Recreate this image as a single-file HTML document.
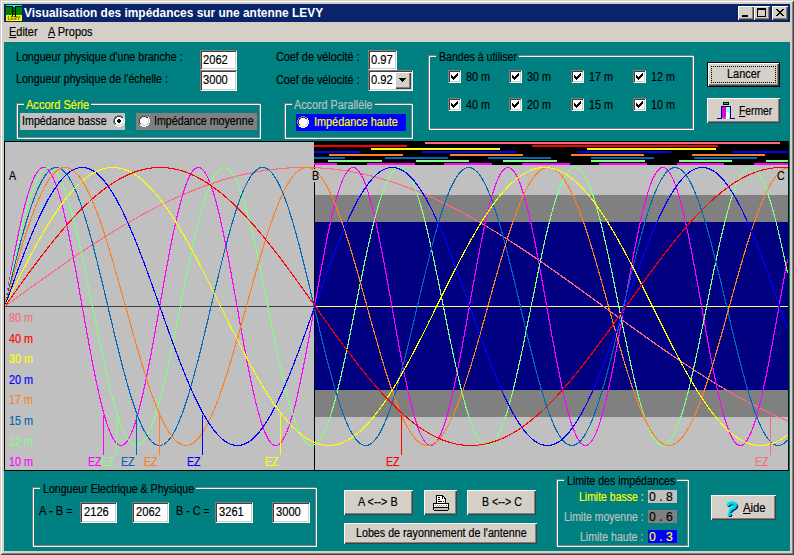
<!DOCTYPE html>
<html><head><meta charset="utf-8"><title>Visualisation des impédances sur une antenne LEVY</title>
<style>
html,body{margin:0;padding:0;}
body{width:794px;height:555px;overflow:hidden;background:#D4D0C8;font-family:"Liberation Sans",sans-serif;position:relative;}
#win{position:absolute;left:0;top:0;width:794px;height:555px;background:#D4D0C8;box-sizing:border-box;overflow:hidden;
 box-shadow:inset 1px 1px 0 #D4D0C8, inset -1px -1px 0 #404040, inset 2px 2px 0 #fff, inset -2px -2px 0 #808080;}
.t{position:absolute;white-space:nowrap;line-height:16px;transform-origin:0 50%;font-family:"Liberation Sans",sans-serif;-webkit-text-stroke:0.18px currentColor;}
.t u{text-decoration:underline;text-underline-offset:1px;}
</style></head><body><div id="win">
<div style="position:absolute;left:4px;top:4px;width:786px;height:18px;background:#0A246A;"></div>
<svg style="position:absolute;left:6px;top:5px" width="16" height="16" viewBox="0 0 16 16" shape-rendering="crispEdges">
<rect width="16" height="1" fill="#00FFFF"/><rect y="1" width="16" height="1" fill="#000"/><rect x="7" y="1" width="2" height="1" fill="#00FFFF"/>
<rect y="2" width="16" height="8" fill="#008000"/><rect y="10" width="16" height="6" fill="#FFFF00"/>
<rect x="6" y="1" width="1.4" height="11" fill="#000"/><rect x="9" y="1" width="1.4" height="11" fill="#000"/>
<rect x="7.4" y="2" width="1.6" height="8" fill="#006000"/>
<rect x="7.6" y="4" width="1.2" height="1" fill="#00A000"/><rect x="7.6" y="7" width="1.2" height="1" fill="#00A000"/>
<text x="1.5" y="15" font-family="Liberation Sans" font-size="5.5" font-weight="700" fill="#5a5a00" textLength="13">LEVY</text>
</svg>
<div class="t" style="left:23.7px;top:4.67px;color:#fff;font-size:12.5px;font-weight:700;transform:scaleX(0.9533);-webkit-text-stroke:0;">Visualisation des impédances sur une antenne LEVY</div>
<div style="position:absolute;left:738px;top:6px;width:16px;height:14px;background:#D4D0C8;box-shadow:inset 1px 1px 0 #fff, inset -1px -1px 0 #404040, inset -2px -2px 0 #808080;"></div>
<svg style="position:absolute;left:738px;top:6px" width="16" height="14" viewBox="0 0 16 14" shape-rendering="crispEdges"><rect x="4" y="9" width="6" height="2" fill="#000"/></svg>
<div style="position:absolute;left:754px;top:6px;width:16px;height:14px;background:#D4D0C8;box-shadow:inset 1px 1px 0 #fff, inset -1px -1px 0 #404040, inset -2px -2px 0 #808080;"></div>
<svg style="position:absolute;left:754px;top:6px" width="16" height="14" viewBox="0 0 16 14" shape-rendering="crispEdges"><rect x="3" y="2" width="8" height="8" fill="none" stroke="#000" stroke-width="1" transform="translate(.5,.5)"/><rect x="3" y="2" width="9" height="2" fill="#000"/></svg>
<div style="position:absolute;left:772px;top:6px;width:16px;height:14px;background:#D4D0C8;box-shadow:inset 1px 1px 0 #fff, inset -1px -1px 0 #404040, inset -2px -2px 0 #808080;"></div>
<svg style="position:absolute;left:772px;top:6px" width="16" height="14" viewBox="0 0 16 14" shape-rendering="crispEdges"><path d="M4 3h2v1h1v1h2v-1h1v-1h2v1h-1v1h-1v1h-1v1h1v1h1v1h1v1h-2v-1h-1v-1h-2v1h-1v1h-2v-1h1v-1h1v-1h1v-1h-1v-1h-1v-1h-1z" fill="#000"/></svg>
<div style="position:absolute;left:4px;top:22px;width:786px;height:20px;background:#D4D0C8;"></div>
<div class="t" style="left:9.2px;top:23.84px;color:#000;font-size:12px;font-weight:400;transform:scaleX(0.9123);"><u>E</u>diter</div>
<div class="t" style="left:48.2px;top:23.84px;color:#000;font-size:12px;font-weight:400;transform:scaleX(0.9158);"><u>A</u> Propos</div>
<div style="position:absolute;left:4px;top:42px;width:786px;height:509px;background:#008080;"></div>
<svg width="794" height="555" viewBox="0 0 794 555" style="position:absolute;left:0;top:0" shape-rendering="crispEdges"><rect x="5" y="142" width="783" height="328" fill="#C0C0C0"/>
<rect x="315" y="165" width="473" height="305" fill="#C0C0C0"/>
<rect x="315" y="195" width="473" height="222" fill="#808080"/>
<rect x="315" y="222" width="473" height="168" fill="#000080"/>
<rect x="314" y="142" width="474" height="23" fill="#000000"/>
<rect x="5" y="306" width="309" height="1" fill="#404040"/>
<rect x="315" y="306" width="473" height="1" fill="#FFFF70"/>
<rect x="314" y="165" width="1" height="305" fill="#000"/>
<rect x="313" y="169" width="8" height="13" fill="#C0C0C0"/>
<rect x="425" y="142" width="355" height="2" fill="#FF6880"/>
<rect x="314" y="145" width="93" height="2" fill="#FF0000"/>
<rect x="532" y="145" width="186" height="2" fill="#FF0000"/>
<rect x="371" y="148" width="129" height="2" fill="#FFFF00"/>
<rect x="587" y="148" width="129" height="2" fill="#FFFF00"/>
<rect x="314" y="151" width="47" height="2" fill="#0000FF"/>
<rect x="422" y="151" width="94" height="2" fill="#0000FF"/>
<rect x="577" y="151" width="94" height="2" fill="#0000FF"/>
<rect x="732" y="151" width="57" height="2" fill="#0000FF"/>
<rect x="329" y="154" width="74" height="2" fill="#FF8020"/>
<rect x="450" y="154" width="73" height="2" fill="#FF8020"/>
<rect x="571" y="154" width="73" height="2" fill="#FF8020"/>
<rect x="692" y="154" width="73" height="2" fill="#FF8020"/>
<rect x="314" y="157" width="31" height="2" fill="#0068B8"/>
<rect x="385" y="157" width="63" height="2" fill="#0068B8"/>
<rect x="488" y="157" width="63" height="2" fill="#0068B8"/>
<rect x="591" y="157" width="63" height="2" fill="#0068B8"/>
<rect x="694" y="157" width="63" height="2" fill="#0068B8"/>
<rect x="328" y="160" width="54" height="2" fill="#80FF80"/>
<rect x="416" y="160" width="53" height="2" fill="#80FF80"/>
<rect x="503" y="160" width="54" height="2" fill="#80FF80"/>
<rect x="591" y="160" width="54" height="2" fill="#80FF80"/>
<rect x="679" y="160" width="53" height="2" fill="#80FF80"/>
<rect x="766" y="160" width="23" height="2" fill="#80FF80"/>
<rect x="314" y="163" width="23" height="2" fill="#FF00FF"/>
<rect x="367" y="163" width="48" height="2" fill="#FF00FF"/>
<rect x="444" y="163" width="48" height="2" fill="#FF00FF"/>
<rect x="522" y="163" width="48" height="2" fill="#FF00FF"/>
<rect x="599" y="163" width="48" height="2" fill="#FF00FF"/>
<rect x="677" y="163" width="47" height="2" fill="#FF00FF"/>
<rect x="754" y="163" width="35" height="2" fill="#FF00FF"/>
<polyline points="5.5,306.0 6.5,305.3 7.5,304.5 8.5,303.8 9.5,303.1 10.5,302.3 11.5,301.6 12.5,300.9 13.5,300.2 14.5,299.4 15.5,298.7 16.5,298.0 17.5,297.2 18.5,296.5 19.5,295.8 20.5,295.1 21.5,294.3 22.5,293.6 23.5,292.9 24.5,292.2 25.5,291.4 26.5,290.7 27.5,290.0 28.5,289.3 29.5,288.5 30.5,287.8 31.5,287.1 32.5,286.4 33.5,285.6 34.5,284.9 35.5,284.2 36.5,283.5 37.5,282.8 38.5,282.1 39.5,281.3 40.5,280.6 41.5,279.9 42.5,279.2 43.5,278.5 44.5,277.8 45.5,277.0 46.5,276.3 47.5,275.6 48.5,274.9 49.5,274.2 50.5,273.5 51.5,272.8 52.5,272.1 53.5,271.4 54.5,270.7 55.5,270.0 56.5,269.3 57.5,268.6 58.5,267.9 59.5,267.2 60.5,266.5 61.5,265.8 62.5,265.1 63.5,264.4 64.5,263.7 65.5,263.0 66.5,262.3 67.5,261.6 68.5,260.9 69.5,260.2 70.5,259.5 71.5,258.8 72.5,258.2 73.5,257.5 74.5,256.8 75.5,256.1 76.5,255.4 77.5,254.8 78.5,254.1 79.5,253.4 80.5,252.7 81.5,252.1 82.5,251.4 83.5,250.7 84.5,250.1 85.5,249.4 86.5,248.7 87.5,248.1 88.5,247.4 89.5,246.7 90.5,246.1 91.5,245.4 92.5,244.8 93.5,244.1 94.5,243.5 95.5,242.8 96.5,242.2 97.5,241.5 98.5,240.9 99.5,240.2 100.5,239.6 101.5,239.0 102.5,238.3 103.5,237.7 104.5,237.1 105.5,236.4 106.5,235.8 107.5,235.2 108.5,234.6 109.5,233.9 110.5,233.3 111.5,232.7 112.5,232.1 113.5,231.5 114.5,230.8 115.5,230.2 116.5,229.6 117.5,229.0 118.5,228.4 119.5,227.8 120.5,227.2 121.5,226.6 122.5,226.0 123.5,225.4 124.5,224.8 125.5,224.2 126.5,223.7 127.5,223.1 128.5,222.5 129.5,221.9 130.5,221.3 131.5,220.8 132.5,220.2 133.5,219.6 134.5,219.0 135.5,218.5 136.5,217.9 137.5,217.4 138.5,216.8 139.5,216.2 140.5,215.7 141.5,215.1 142.5,214.6 143.5,214.0 144.5,213.5 145.5,213.0 146.5,212.4 147.5,211.9 148.5,211.4 149.5,210.8 150.5,210.3 151.5,209.8 152.5,209.2 153.5,208.7 154.5,208.2 155.5,207.7 156.5,207.2 157.5,206.7 158.5,206.2 159.5,205.7 160.5,205.2 161.5,204.7 162.5,204.2 163.5,203.7 164.5,203.2 165.5,202.7 166.5,202.2 167.5,201.7 168.5,201.3 169.5,200.8 170.5,200.3 171.5,199.8 172.5,199.4 173.5,198.9 174.5,198.5 175.5,198.0 176.5,197.5 177.5,197.1 178.5,196.6 179.5,196.2 180.5,195.8 181.5,195.3 182.5,194.9 183.5,194.5 184.5,194.0 185.5,193.6 186.5,193.2 187.5,192.7 188.5,192.3 189.5,191.9 190.5,191.5 191.5,191.1 192.5,190.7 193.5,190.3 194.5,189.9 195.5,189.5 196.5,189.1 197.5,188.7 198.5,188.3 199.5,187.9 200.5,187.6 201.5,187.2 202.5,186.8 203.5,186.5 204.5,186.1 205.5,185.7 206.5,185.4 207.5,185.0 208.5,184.7 209.5,184.3 210.5,184.0 211.5,183.6 212.5,183.3 213.5,182.9 214.5,182.6 215.5,182.3 216.5,182.0 217.5,181.6 218.5,181.3 219.5,181.0 220.5,180.7 221.5,180.4 222.5,180.1 223.5,179.8 224.5,179.5 225.5,179.2 226.5,178.9 227.5,178.6 228.5,178.3 229.5,178.0 230.5,177.8 231.5,177.5 232.5,177.2 233.5,177.0 234.5,176.7 235.5,176.4 236.5,176.2 237.5,175.9 238.5,175.7 239.5,175.4 240.5,175.2 241.5,175.0 242.5,174.7 243.5,174.5 244.5,174.3 245.5,174.0 246.5,173.8 247.5,173.6 248.5,173.4 249.5,173.2 250.5,173.0 251.5,172.8 252.5,172.6 253.5,172.4 254.5,172.2 255.5,172.0 256.5,171.8 257.5,171.7 258.5,171.5 259.5,171.3 260.5,171.1 261.5,171.0 262.5,170.8 263.5,170.7 264.5,170.5 265.5,170.4 266.5,170.2 267.5,170.1 268.5,169.9 269.5,169.8 270.5,169.7 271.5,169.5 272.5,169.4 273.5,169.3 274.5,169.2 275.5,169.1 276.5,169.0 277.5,168.9 278.5,168.8 279.5,168.7 280.5,168.6 281.5,168.5 282.5,168.4 283.5,168.3 284.5,168.2 285.5,168.2 286.5,168.1 287.5,168.0 288.5,168.0 289.5,167.9 290.5,167.9 291.5,167.8 292.5,167.8 293.5,167.7 294.5,167.7 295.5,167.6 296.5,167.6 297.5,167.6 298.5,167.6 299.5,167.5 300.5,167.5 301.5,167.5 302.5,167.5 303.5,167.5 304.5,167.5 305.5,167.5 306.5,167.5 307.5,167.5 308.5,167.5 309.5,167.6 310.5,167.6 311.5,167.6 312.5,167.6 313.5,167.7 314.5,167.7 315.5,167.7 316.5,167.8 317.5,167.8 318.5,167.9 319.5,167.9 320.5,168.0 321.5,168.1 322.5,168.1 323.5,168.2 324.5,168.3 325.5,168.4 326.5,168.5 327.5,168.5 328.5,168.6 329.5,168.7 330.5,168.8 331.5,168.9 332.5,169.0 333.5,169.1 334.5,169.3 335.5,169.4 336.5,169.5 337.5,169.6 338.5,169.7 339.5,169.9 340.5,170.0 341.5,170.2 342.5,170.3 343.5,170.4 344.5,170.6 345.5,170.8 346.5,170.9 347.5,171.1 348.5,171.2 349.5,171.4 350.5,171.6 351.5,171.8 352.5,171.9 353.5,172.1 354.5,172.3 355.5,172.5 356.5,172.7 357.5,172.9 358.5,173.1 359.5,173.3 360.5,173.5 361.5,173.7 362.5,174.0 363.5,174.2 364.5,174.4 365.5,174.6 366.5,174.9 367.5,175.1 368.5,175.3 369.5,175.6 370.5,175.8 371.5,176.1 372.5,176.3 373.5,176.6 374.5,176.8 375.5,177.1 376.5,177.4 377.5,177.7 378.5,177.9 379.5,178.2 380.5,178.5 381.5,178.8 382.5,179.1 383.5,179.4 384.5,179.7 385.5,180.0 386.5,180.3 387.5,180.6 388.5,180.9 389.5,181.2 390.5,181.5 391.5,181.8 392.5,182.2 393.5,182.5 394.5,182.8 395.5,183.1 396.5,183.5 397.5,183.8 398.5,184.2 399.5,184.5 400.5,184.9 401.5,185.2 402.5,185.6 403.5,185.9 404.5,186.3 405.5,186.7 406.5,187.0 407.5,187.4 408.5,187.8 409.5,188.2 410.5,188.6 411.5,188.9 412.5,189.3 413.5,189.7 414.5,190.1 415.5,190.5 416.5,190.9 417.5,191.3 418.5,191.8 419.5,192.2 420.5,192.6 421.5,193.0 422.5,193.4 423.5,193.8 424.5,194.3 425.5,194.7 426.5,195.1 427.5,195.6 428.5,196.0 429.5,196.5 430.5,196.9 431.5,197.4 432.5,197.8 433.5,198.3 434.5,198.7 435.5,199.2 436.5,199.7 437.5,200.1 438.5,200.6 439.5,201.1 440.5,201.6 441.5,202.0 442.5,202.5 443.5,203.0 444.5,203.5 445.5,204.0 446.5,204.5 447.5,205.0 448.5,205.5 449.5,206.0 450.5,206.5 451.5,207.0 452.5,207.5 453.5,208.0 454.5,208.5 455.5,209.0 456.5,209.6 457.5,210.1 458.5,210.6 459.5,211.1 460.5,211.7 461.5,212.2 462.5,212.7 463.5,213.3 464.5,213.8 465.5,214.4 466.5,214.9 467.5,215.5 468.5,216.0 469.5,216.6 470.5,217.1 471.5,217.7 472.5,218.3 473.5,218.8 474.5,219.4 475.5,220.0 476.5,220.5 477.5,221.1 478.5,221.7 479.5,222.3 480.5,222.8 481.5,223.4 482.5,224.0 483.5,224.6 484.5,225.2 485.5,225.8 486.5,226.4 487.5,227.0 488.5,227.6 489.5,228.2 490.5,228.8 491.5,229.4 492.5,230.0 493.5,230.6 494.5,231.2 495.5,231.8 496.5,232.4 497.5,233.1 498.5,233.7 499.5,234.3 500.5,234.9 501.5,235.6 502.5,236.2 503.5,236.8 504.5,237.4 505.5,238.1 506.5,238.7 507.5,239.3 508.5,240.0 509.5,240.6 510.5,241.3 511.5,241.9 512.5,242.6 513.5,243.2 514.5,243.9 515.5,244.5 516.5,245.2 517.5,245.8 518.5,246.5 519.5,247.1 520.5,247.8 521.5,248.5 522.5,249.1 523.5,249.8 524.5,250.5 525.5,251.1 526.5,251.8 527.5,252.5 528.5,253.1 529.5,253.8 530.5,254.5 531.5,255.2 532.5,255.8 533.5,256.5 534.5,257.2 535.5,257.9 536.5,258.6 537.5,259.3 538.5,259.9 539.5,260.6 540.5,261.3 541.5,262.0 542.5,262.7 543.5,263.4 544.5,264.1 545.5,264.8 546.5,265.5 547.5,266.2 548.5,266.9 549.5,267.6 550.5,268.3 551.5,269.0 552.5,269.7 553.5,270.4 554.5,271.1 555.5,271.8 556.5,272.5 557.5,273.2 558.5,273.9 559.5,274.6 560.5,275.3 561.5,276.0 562.5,276.8 563.5,277.5 564.5,278.2 565.5,278.9 566.5,279.6 567.5,280.3 568.5,281.0 569.5,281.8 570.5,282.5 571.5,283.2 572.5,283.9 573.5,284.6 574.5,285.4 575.5,286.1 576.5,286.8 577.5,287.5 578.5,288.2 579.5,289.0 580.5,289.7 581.5,290.4 582.5,291.1 583.5,291.9 584.5,292.6 585.5,293.3 586.5,294.0 587.5,294.8 588.5,295.5 589.5,296.2 590.5,297.0 591.5,297.7 592.5,298.4 593.5,299.1 594.5,299.9 595.5,300.6 596.5,301.3 597.5,302.1 598.5,302.8 599.5,303.5 600.5,304.2 601.5,305.0 602.5,305.7 603.5,306.4 604.5,307.2 605.5,307.9 606.5,308.6 607.5,309.3 608.5,310.1 609.5,310.8 610.5,311.5 611.5,312.3 612.5,313.0 613.5,313.7 614.5,314.4 615.5,315.2 616.5,315.9 617.5,316.6 618.5,317.4 619.5,318.1 620.5,318.8 621.5,319.5 622.5,320.3 623.5,321.0 624.5,321.7 625.5,322.4 626.5,323.2 627.5,323.9 628.5,324.6 629.5,325.3 630.5,326.1 631.5,326.8 632.5,327.5 633.5,328.2 634.5,328.9 635.5,329.7 636.5,330.4 637.5,331.1 638.5,331.8 639.5,332.5 640.5,333.2 641.5,334.0 642.5,334.7 643.5,335.4 644.5,336.1 645.5,336.8 646.5,337.5 647.5,338.2 648.5,338.9 649.5,339.7 650.5,340.4 651.5,341.1 652.5,341.8 653.5,342.5 654.5,343.2 655.5,343.9 656.5,344.6 657.5,345.3 658.5,346.0 659.5,346.7 660.5,347.4 661.5,348.1 662.5,348.8 663.5,349.5 664.5,350.2 665.5,350.9 666.5,351.5 667.5,352.2 668.5,352.9 669.5,353.6 670.5,354.3 671.5,355.0 672.5,355.7 673.5,356.3 674.5,357.0 675.5,357.7 676.5,358.4 677.5,359.1 678.5,359.7 679.5,360.4 680.5,361.1 681.5,361.7 682.5,362.4 683.5,363.1 684.5,363.7 685.5,364.4 686.5,365.1 687.5,365.7 688.5,366.4 689.5,367.0 690.5,367.7 691.5,368.4 692.5,369.0 693.5,369.7 694.5,370.3 695.5,371.0 696.5,371.6 697.5,372.2 698.5,372.9 699.5,373.5 700.5,374.2 701.5,374.8 702.5,375.4 703.5,376.1 704.5,376.7 705.5,377.3 706.5,377.9 707.5,378.6 708.5,379.2 709.5,379.8 710.5,380.4 711.5,381.1 712.5,381.7 713.5,382.3 714.5,382.9 715.5,383.5 716.5,384.1 717.5,384.7 718.5,385.3 719.5,385.9 720.5,386.5 721.5,387.1 722.5,387.7 723.5,388.3 724.5,388.9 725.5,389.5 726.5,390.0 727.5,390.6 728.5,391.2 729.5,391.8 730.5,392.4 731.5,392.9 732.5,393.5 733.5,394.1 734.5,394.6 735.5,395.2 736.5,395.8 737.5,396.3 738.5,396.9 739.5,397.4 740.5,398.0 741.5,398.5 742.5,399.1 743.5,399.6 744.5,400.1 745.5,400.7 746.5,401.2 747.5,401.8 748.5,402.3 749.5,402.8 750.5,403.3 751.5,403.9 752.5,404.4 753.5,404.9 754.5,405.4 755.5,405.9 756.5,406.4 757.5,406.9 758.5,407.4 759.5,407.9 760.5,408.4 761.5,408.9 762.5,409.4 763.5,409.9 764.5,410.4 765.5,410.9 766.5,411.4 767.5,411.8 768.5,412.3 769.5,412.8 770.5,413.2 771.5,413.7 772.5,414.2 773.5,414.6 774.5,415.1 775.5,415.5 776.5,416.0 777.5,416.4 778.5,416.9 779.5,417.3 780.5,417.8 781.5,418.2 782.5,418.6 783.5,419.1 784.5,419.5 785.5,419.9 786.5,420.3 787.5,420.8" fill="none" stroke="#FF6880" stroke-width="1.15" shape-rendering="crispEdges"/>
<polyline points="5.5,302.6 6.5,296.9 7.5,291.3 8.5,285.7 9.5,280.2 10.5,274.6 11.5,269.2 12.5,263.8 13.5,258.4 14.5,253.2 15.5,248.0 16.5,243.0 17.5,238.0 18.5,233.1 19.5,228.4 20.5,223.8 21.5,219.4 22.5,215.0 23.5,210.9 24.5,206.8 25.5,203.0 26.5,199.3 27.5,195.8 28.5,192.5 29.5,189.4 30.5,186.4 31.5,183.7 32.5,181.1 33.5,178.8 34.5,176.7 35.5,174.8 36.5,173.1 37.5,171.6 38.5,170.4 39.5,169.3 40.5,168.5 41.5,168.0 42.5,167.6 43.5,167.5 44.5,167.6 45.5,168.0 46.5,168.5 47.5,169.3 48.5,170.3 49.5,171.6 50.5,173.1 51.5,174.7 52.5,176.6 53.5,178.8 54.5,181.1 55.5,183.6 56.5,186.4 57.5,189.3 58.5,192.4 59.5,195.7 60.5,199.2 61.5,202.9 62.5,206.8 63.5,210.8 64.5,214.9 65.5,219.3 66.5,223.7 67.5,228.3 68.5,233.0 69.5,237.9 70.5,242.9 71.5,247.9 72.5,253.1 73.5,258.3 74.5,263.7 75.5,269.1 76.5,274.5 77.5,280.0 78.5,285.6 79.5,291.2 80.5,296.8 81.5,302.4 82.5,308.1 83.5,313.7 84.5,319.3 85.5,324.9 86.5,330.5 87.5,336.1 88.5,341.5 89.5,347.0 90.5,352.3 91.5,357.6 92.5,362.8 93.5,367.9 94.5,372.9 95.5,377.8 96.5,382.6 97.5,387.3 98.5,391.8 99.5,396.2 100.5,400.4 101.5,404.5 102.5,408.4 103.5,412.2 104.5,415.7 105.5,419.1 106.5,422.3 107.5,425.4 108.5,428.2 109.5,430.8 110.5,433.2 111.5,435.4 112.5,437.4 113.5,439.2 114.5,440.8 115.5,442.1 116.5,443.3 117.5,444.2 118.5,444.8 119.5,445.3 120.5,445.5 121.5,445.5 122.5,445.2 123.5,444.7 124.5,444.0 125.5,443.1 126.5,442.0 127.5,440.6 128.5,439.0 129.5,437.2 130.5,435.2 131.5,432.9 132.5,430.5 133.5,427.8 134.5,425.0 135.5,421.9 136.5,418.7 137.5,415.2 138.5,411.6 139.5,407.9 140.5,403.9 141.5,399.8 142.5,395.6 143.5,391.2 144.5,386.6 145.5,382.0 146.5,377.2 147.5,372.2 148.5,367.2 149.5,362.1 150.5,356.9 151.5,351.6 152.5,346.2 153.5,340.8 154.5,335.3 155.5,329.7 156.5,324.2 157.5,318.6 158.5,312.9 159.5,307.3 160.5,301.7 161.5,296.0 162.5,290.4 163.5,284.8 164.5,279.3 165.5,273.8 166.5,268.3 167.5,262.9 168.5,257.6 169.5,252.4 170.5,247.2 171.5,242.2 172.5,237.2 173.5,232.4 174.5,227.7 175.5,223.1 176.5,218.6 177.5,214.4 178.5,210.2 179.5,206.2 180.5,202.4 181.5,198.7 182.5,195.3 183.5,192.0 184.5,188.9 185.5,186.0 186.5,183.3 187.5,180.8 188.5,178.5 189.5,176.4 190.5,174.5 191.5,172.8 192.5,171.4 193.5,170.2 194.5,169.2 195.5,168.4 196.5,167.9 197.5,167.6 198.5,167.5 199.5,167.7 200.5,168.0 201.5,168.6 202.5,169.5 203.5,170.5 204.5,171.8 205.5,173.3 206.5,175.0 207.5,177.0 208.5,179.1 209.5,181.5 210.5,184.1 211.5,186.8 212.5,189.8 213.5,192.9 214.5,196.3 215.5,199.8 216.5,203.5 217.5,207.4 218.5,211.4 219.5,215.6 220.5,220.0 221.5,224.5 222.5,229.1 223.5,233.8 224.5,238.7 225.5,243.7 226.5,248.7 227.5,253.9 228.5,259.2 229.5,264.5 230.5,269.9 231.5,275.4 232.5,280.9 233.5,286.5 234.5,292.1 235.5,297.7 236.5,303.3 237.5,309.0 238.5,314.6 239.5,320.2 240.5,325.8 241.5,331.4 242.5,336.9 243.5,342.4 244.5,347.8 245.5,353.2 246.5,358.5 247.5,363.6 248.5,368.7 249.5,373.7 250.5,378.6 251.5,383.4 252.5,388.0 253.5,392.5 254.5,396.9 255.5,401.1 256.5,405.1 257.5,409.0 258.5,412.7 259.5,416.3 260.5,419.7 261.5,422.8 262.5,425.8 263.5,428.6 264.5,431.2 265.5,433.6 266.5,435.8 267.5,437.7 268.5,439.5 269.5,441.0 270.5,442.3 271.5,443.4 272.5,444.3 273.5,444.9 274.5,445.3 275.5,445.5 276.5,445.4 277.5,445.2 278.5,444.6 279.5,443.9 280.5,442.9 281.5,441.8 282.5,440.3 283.5,438.7 284.5,436.9 285.5,434.8 286.5,432.5 287.5,430.0 288.5,427.4 289.5,424.5 290.5,421.4 291.5,418.1 292.5,414.7 293.5,411.1 294.5,407.2 295.5,403.3 296.5,399.2 297.5,394.9 298.5,390.4 299.5,385.9 300.5,381.2 301.5,376.4 302.5,371.4 303.5,366.4 304.5,361.3 305.5,356.0 306.5,350.7 307.5,345.3 308.5,339.9 309.5,334.4 310.5,328.9 311.5,323.3 312.5,317.7 313.5,312.0 314.5,306.4 315.5,300.7 316.5,295.1 317.5,289.5 318.5,283.9 319.5,278.4 320.5,272.9 321.5,267.4 322.5,262.1 323.5,256.8 324.5,251.5 325.5,246.4 326.5,241.4 327.5,236.4 328.5,231.6 329.5,226.9 330.5,222.4 331.5,218.0 332.5,213.7 333.5,209.6 334.5,205.6 335.5,201.8 336.5,198.2 337.5,194.7 338.5,191.5 339.5,188.4 340.5,185.5 341.5,182.8 342.5,180.4 343.5,178.1 344.5,176.1 345.5,174.2 346.5,172.6 347.5,171.2 348.5,170.0 349.5,169.1 350.5,168.3 351.5,167.8 352.5,167.6 353.5,167.5 354.5,167.7 355.5,168.1 356.5,168.8 357.5,169.6 358.5,170.7 359.5,172.0 360.5,173.6 361.5,175.3 362.5,177.3 363.5,179.5 364.5,181.9 365.5,184.5 366.5,187.3 367.5,190.3 368.5,193.5 369.5,196.8 370.5,200.4 371.5,204.1 372.5,208.0 373.5,212.1 374.5,216.3 375.5,220.7 376.5,225.2 377.5,229.8 378.5,234.6 379.5,239.5 380.5,244.5 381.5,249.6 382.5,254.8 383.5,260.0 384.5,265.4 385.5,270.8 386.5,276.3 387.5,281.8 388.5,287.4 389.5,293.0 390.5,298.6 391.5,304.2 392.5,309.9 393.5,315.5 394.5,321.1 395.5,326.7 396.5,332.3 397.5,337.8 398.5,343.3 399.5,348.7 400.5,354.0 401.5,359.3 402.5,364.5 403.5,369.5 404.5,374.5 405.5,379.4 406.5,384.1 407.5,388.7 408.5,393.2 409.5,397.5 410.5,401.7 411.5,405.8 412.5,409.6 413.5,413.3 414.5,416.8 415.5,420.2 416.5,423.3 417.5,426.3 418.5,429.1 419.5,431.6 420.5,434.0 421.5,436.1 422.5,438.0 423.5,439.8 424.5,441.2 425.5,442.5 426.5,443.6 427.5,444.4 428.5,445.0 429.5,445.4 430.5,445.5 431.5,445.4 432.5,445.1 433.5,444.5 434.5,443.8 435.5,442.8 436.5,441.5 437.5,440.1 438.5,438.4 439.5,436.6 440.5,434.5 441.5,432.1 442.5,429.6 443.5,426.9 444.5,424.0 445.5,420.9 446.5,417.6 447.5,414.1 448.5,410.5 449.5,406.6 450.5,402.6 451.5,398.5 452.5,394.2 453.5,389.7 454.5,385.1 455.5,380.4 456.5,375.6 457.5,370.6 458.5,365.6 459.5,360.4 460.5,355.2 461.5,349.9 462.5,344.5 463.5,339.0 464.5,333.5 465.5,328.0 466.5,322.4 467.5,316.8 468.5,311.1 469.5,305.5 470.5,299.8 471.5,294.2 472.5,288.6 473.5,283.0 474.5,277.5 475.5,272.0 476.5,266.6 477.5,261.2 478.5,255.9 479.5,250.7 480.5,245.6 481.5,240.6 482.5,235.7 483.5,230.9 484.5,226.2 485.5,221.7 486.5,217.3 487.5,213.0 488.5,208.9 489.5,205.0 490.5,201.2 491.5,197.6 492.5,194.2 493.5,191.0 494.5,187.9 495.5,185.1 496.5,182.4 497.5,180.0 498.5,177.8 499.5,175.7 500.5,173.9 501.5,172.4 502.5,171.0 503.5,169.8 504.5,168.9 505.5,168.2 506.5,167.8 507.5,167.5 508.5,167.5 509.5,167.7 510.5,168.2 511.5,168.9 512.5,169.8 513.5,170.9 514.5,172.3 515.5,173.8 516.5,175.6 517.5,177.6 518.5,179.9 519.5,182.3 520.5,184.9 521.5,187.8 522.5,190.8 523.5,194.0 524.5,197.4 525.5,201.0 526.5,204.7 527.5,208.7 528.5,212.8 529.5,217.0 530.5,221.4 531.5,225.9 532.5,230.6 533.5,235.4 534.5,240.3 535.5,245.3 536.5,250.4 537.5,255.6 538.5,260.9 539.5,266.2 540.5,271.7 541.5,277.2 542.5,282.7 543.5,288.3 544.5,293.9 545.5,299.5 546.5,305.1 547.5,310.8 548.5,316.4 549.5,322.0 550.5,327.6 551.5,333.2 552.5,338.7 553.5,344.2 554.5,349.5 555.5,354.9 556.5,360.1 557.5,365.3 558.5,370.3 559.5,375.3 560.5,380.1 561.5,384.9 562.5,389.5 563.5,393.9 564.5,398.2 565.5,402.4 566.5,406.4 567.5,410.2 568.5,413.9 569.5,417.4 570.5,420.7 571.5,423.8 572.5,426.7 573.5,429.5 574.5,432.0 575.5,434.3 576.5,436.4 577.5,438.3 578.5,440.0 579.5,441.5 580.5,442.7 581.5,443.7 582.5,444.5 583.5,445.1 584.5,445.4 585.5,445.5 586.5,445.4 587.5,445.0 588.5,444.4 589.5,443.6 590.5,442.6 591.5,441.3 592.5,439.9 593.5,438.1 594.5,436.2 595.5,434.1 596.5,431.8 597.5,429.2 598.5,426.5 599.5,423.5 600.5,420.4 601.5,417.0 602.5,413.5 603.5,409.9 604.5,406.0 605.5,402.0 606.5,397.8 607.5,393.5 608.5,389.0 609.5,384.4 610.5,379.7 611.5,374.8 612.5,369.8 613.5,364.8 614.5,359.6 615.5,354.3 616.5,349.0 617.5,343.6 618.5,338.1 619.5,332.6 620.5,327.1 621.5,321.5 622.5,315.9 623.5,310.2 624.5,304.6 625.5,298.9 626.5,293.3 627.5,287.7 628.5,282.1 629.5,276.6 630.5,271.1 631.5,265.7 632.5,260.4 633.5,255.1 634.5,249.9 635.5,244.8 636.5,239.8 637.5,234.9 638.5,230.1 639.5,225.5 640.5,220.9 641.5,216.6 642.5,212.3 643.5,208.3 644.5,204.4 645.5,200.6 646.5,197.1 647.5,193.7 648.5,190.5 649.5,187.5 650.5,184.6 651.5,182.0 652.5,179.6 653.5,177.4 654.5,175.4 655.5,173.7 656.5,172.1 657.5,170.8 658.5,169.7 659.5,168.8 660.5,168.1 661.5,167.7 662.5,167.5 663.5,167.5 664.5,167.8 665.5,168.3 666.5,169.0 667.5,169.9 668.5,171.1 669.5,172.5 670.5,174.1 671.5,175.9 672.5,178.0 673.5,180.2 674.5,182.7 675.5,185.4 676.5,188.2 677.5,191.3 678.5,194.5 679.5,198.0 680.5,201.6 681.5,205.4 682.5,209.3 683.5,213.4 684.5,217.7 685.5,222.1 686.5,226.7 687.5,231.3 688.5,236.1 689.5,241.1 690.5,246.1 691.5,251.2 692.5,256.4 693.5,261.7 694.5,267.1 695.5,272.6 696.5,278.0 697.5,283.6 698.5,289.2 699.5,294.8 700.5,300.4 701.5,306.0 702.5,311.7 703.5,317.3 704.5,322.9 705.5,328.5 706.5,334.1 707.5,339.6 708.5,345.0 709.5,350.4 710.5,355.7 711.5,361.0 712.5,366.1 713.5,371.1 714.5,376.1 715.5,380.9 716.5,385.6 717.5,390.2 718.5,394.6 719.5,398.9 720.5,403.0 721.5,407.0 722.5,410.8 723.5,414.5 724.5,417.9 725.5,421.2 726.5,424.3 727.5,427.2 728.5,429.9 729.5,432.4 730.5,434.7 731.5,436.8 732.5,438.6 733.5,440.3 734.5,441.7 735.5,442.9 736.5,443.9 737.5,444.6 738.5,445.1 739.5,445.4 740.5,445.5 741.5,445.3 742.5,444.9 743.5,444.3 744.5,443.5 745.5,442.4 746.5,441.1 747.5,439.6 748.5,437.9 749.5,435.9 750.5,433.7 751.5,431.4 752.5,428.8 753.5,426.0 754.5,423.0 755.5,419.9 756.5,416.5 757.5,413.0 758.5,409.2 759.5,405.4 760.5,401.3 761.5,397.1 762.5,392.8 763.5,388.3 764.5,383.6 765.5,378.9 766.5,374.0 767.5,369.0 768.5,363.9 769.5,358.8 770.5,353.5 771.5,348.2 772.5,342.7 773.5,337.3 774.5,331.7 775.5,326.2 776.5,320.6 777.5,315.0 778.5,309.3 779.5,303.7 780.5,298.0 781.5,292.4 782.5,286.8 783.5,281.3 784.5,275.7 785.5,270.3 786.5,264.8 787.5,259.5" fill="none" stroke="#FF00FF" stroke-width="1.15" shape-rendering="crispEdges"/>
<polyline points="5.5,303.0 6.5,298.0 7.5,293.1 8.5,288.1 9.5,283.2 10.5,278.3 11.5,273.5 12.5,268.7 13.5,263.9 14.5,259.2 15.5,254.5 16.5,249.9 17.5,245.4 18.5,241.0 19.5,236.7 20.5,232.4 21.5,228.2 22.5,224.2 23.5,220.2 24.5,216.4 25.5,212.6 26.5,209.0 27.5,205.5 28.5,202.2 29.5,199.0 30.5,195.9 31.5,192.9 32.5,190.1 33.5,187.5 34.5,185.0 35.5,182.7 36.5,180.5 37.5,178.5 38.5,176.6 39.5,174.9 40.5,173.4 41.5,172.0 42.5,170.9 43.5,169.9 44.5,169.0 45.5,168.4 46.5,167.9 47.5,167.6 48.5,167.5 49.5,167.6 50.5,167.8 51.5,168.2 52.5,168.8 53.5,169.6 54.5,170.5 55.5,171.6 56.5,172.9 57.5,174.4 58.5,176.0 59.5,177.8 60.5,179.8 61.5,181.9 62.5,184.2 63.5,186.7 64.5,189.3 65.5,192.0 66.5,194.9 67.5,198.0 68.5,201.1 69.5,204.5 70.5,207.9 71.5,211.5 72.5,215.2 73.5,219.0 74.5,222.9 75.5,226.9 76.5,231.1 77.5,235.3 78.5,239.6 79.5,244.0 80.5,248.5 81.5,253.1 82.5,257.7 83.5,262.4 84.5,267.1 85.5,271.9 86.5,276.8 87.5,281.6 88.5,286.6 89.5,291.5 90.5,296.5 91.5,301.4 92.5,306.4 93.5,311.4 94.5,316.3 95.5,321.3 96.5,326.2 97.5,331.2 98.5,336.0 99.5,340.9 100.5,345.7 101.5,350.4 102.5,355.1 103.5,359.8 104.5,364.3 105.5,368.8 106.5,373.2 107.5,377.5 108.5,381.8 109.5,385.9 110.5,389.9 111.5,393.9 112.5,397.7 113.5,401.4 114.5,405.0 115.5,408.4 116.5,411.7 117.5,414.9 118.5,418.0 119.5,420.9 120.5,423.6 121.5,426.2 122.5,428.7 123.5,431.0 124.5,433.1 125.5,435.1 126.5,436.9 127.5,438.5 128.5,440.0 129.5,441.3 130.5,442.4 131.5,443.4 132.5,444.2 133.5,444.8 134.5,445.2 135.5,445.4 136.5,445.5 137.5,445.4 138.5,445.1 139.5,444.6 140.5,444.0 141.5,443.2 142.5,442.2 143.5,441.0 144.5,439.7 145.5,438.2 146.5,436.5 147.5,434.6 148.5,432.6 149.5,430.4 150.5,428.1 151.5,425.6 152.5,423.0 153.5,420.2 154.5,417.2 155.5,414.2 156.5,410.9 157.5,407.6 158.5,404.1 159.5,400.5 160.5,396.8 161.5,392.9 162.5,389.0 163.5,384.9 164.5,380.8 165.5,376.5 166.5,372.2 167.5,367.7 168.5,363.2 169.5,358.7 170.5,354.0 171.5,349.3 172.5,344.5 173.5,339.7 174.5,334.9 175.5,330.0 176.5,325.1 177.5,320.1 178.5,315.2 179.5,310.2 180.5,305.2 181.5,300.2 182.5,295.3 183.5,290.3 184.5,285.4 185.5,280.5 186.5,275.6 187.5,270.8 188.5,266.0 189.5,261.2 190.5,256.6 191.5,252.0 192.5,247.4 193.5,242.9 194.5,238.6 195.5,234.3 196.5,230.1 197.5,225.9 198.5,221.9 199.5,218.0 200.5,214.3 201.5,210.6 202.5,207.1 203.5,203.6 204.5,200.4 205.5,197.2 206.5,194.2 207.5,191.3 208.5,188.6 209.5,186.1 210.5,183.7 211.5,181.4 212.5,179.3 213.5,177.4 214.5,175.6 215.5,174.0 216.5,172.6 217.5,171.4 218.5,170.3 219.5,169.4 220.5,168.7 221.5,168.1 222.5,167.7 223.5,167.5 224.5,167.5 225.5,167.7 226.5,168.0 227.5,168.5 228.5,169.2 229.5,170.1 230.5,171.1 231.5,172.4 232.5,173.7 233.5,175.3 234.5,177.0 235.5,178.9 236.5,181.0 237.5,183.2 238.5,185.6 239.5,188.1 240.5,190.8 241.5,193.6 242.5,196.6 243.5,199.7 244.5,203.0 245.5,206.4 246.5,209.9 247.5,213.5 248.5,217.3 249.5,221.2 250.5,225.1 251.5,229.2 252.5,233.4 253.5,237.7 254.5,242.1 255.5,246.5 256.5,251.0 257.5,255.6 258.5,260.3 259.5,265.0 260.5,269.8 261.5,274.6 262.5,279.5 263.5,284.4 264.5,289.3 265.5,294.3 266.5,299.2 267.5,304.2 268.5,309.2 269.5,314.2 270.5,319.1 271.5,324.1 272.5,329.0 273.5,333.9 274.5,338.8 275.5,343.6 276.5,348.4 277.5,353.1 278.5,357.7 279.5,362.3 280.5,366.8 281.5,371.3 282.5,375.7 283.5,379.9 284.5,384.1 285.5,388.2 286.5,392.2 287.5,396.0 288.5,399.8 289.5,403.4 290.5,406.9 291.5,410.3 292.5,413.5 293.5,416.6 294.5,419.6 295.5,422.4 296.5,425.1 297.5,427.6 298.5,430.0 299.5,432.2 300.5,434.2 301.5,436.1 302.5,437.8 303.5,439.4 304.5,440.8 305.5,442.0 306.5,443.0 307.5,443.8 308.5,444.5 309.5,445.0 310.5,445.3 311.5,445.5 312.5,445.5 313.5,445.2 314.5,444.9 315.5,444.3 316.5,443.6 317.5,442.6 318.5,441.5 319.5,440.3 320.5,438.8 321.5,437.2 322.5,435.5 323.5,433.5 324.5,431.4 325.5,429.1 326.5,426.7 327.5,424.2 328.5,421.4 329.5,418.6 330.5,415.5 331.5,412.4 332.5,409.1 333.5,405.7 334.5,402.1 335.5,398.4 336.5,394.6 337.5,390.7 338.5,386.7 339.5,382.6 340.5,378.4 341.5,374.1 342.5,369.7 343.5,365.2 344.5,360.7 345.5,356.1 346.5,351.4 347.5,346.6 348.5,341.9 349.5,337.0 350.5,332.1 351.5,327.2 352.5,322.3 353.5,317.3 354.5,312.4 355.5,307.4 356.5,302.4 357.5,297.4 358.5,292.5 359.5,287.5 360.5,282.6 361.5,277.7 362.5,272.9 363.5,268.1 364.5,263.3 365.5,258.6 366.5,254.0 367.5,249.4 368.5,244.9 369.5,240.5 370.5,236.1 371.5,231.9 372.5,227.7 373.5,223.7 374.5,219.7 375.5,215.9 376.5,212.2 377.5,208.6 378.5,205.1 379.5,201.8 380.5,198.6 381.5,195.5 382.5,192.6 383.5,189.8 384.5,187.2 385.5,184.7 386.5,182.4 387.5,180.2 388.5,178.2 389.5,176.4 390.5,174.7 391.5,173.2 392.5,171.9 393.5,170.7 394.5,169.8 395.5,169.0 396.5,168.3 397.5,167.9 398.5,167.6 399.5,167.5 400.5,167.6 401.5,167.8 402.5,168.3 403.5,168.9 404.5,169.7 405.5,170.7 406.5,171.8 407.5,173.1 408.5,174.6 409.5,176.2 410.5,178.1 411.5,180.1 412.5,182.2 413.5,184.5 414.5,187.0 415.5,189.6 416.5,192.4 417.5,195.3 418.5,198.3 419.5,201.5 420.5,204.9 421.5,208.3 422.5,211.9 423.5,215.6 424.5,219.4 425.5,223.4 426.5,227.4 427.5,231.6 428.5,235.8 429.5,240.1 430.5,244.5 431.5,249.0 432.5,253.6 433.5,258.2 434.5,262.9 435.5,267.7 436.5,272.5 437.5,277.3 438.5,282.2 439.5,287.1 440.5,292.1 441.5,297.0 442.5,302.0 443.5,307.0 444.5,312.0 445.5,316.9 446.5,321.9 447.5,326.8 448.5,331.7 449.5,336.6 450.5,341.5 451.5,346.3 452.5,351.0 453.5,355.7 454.5,360.3 455.5,364.9 456.5,369.3 457.5,373.7 458.5,378.1 459.5,382.3 460.5,386.4 461.5,390.4 462.5,394.3 463.5,398.1 464.5,401.8 465.5,405.4 466.5,408.8 467.5,412.1 468.5,415.3 469.5,418.3 470.5,421.2 471.5,423.9 472.5,426.5 473.5,429.0 474.5,431.2 475.5,433.4 476.5,435.3 477.5,437.1 478.5,438.7 479.5,440.2 480.5,441.4 481.5,442.6 482.5,443.5 483.5,444.2 484.5,444.8 485.5,445.2 486.5,445.4 487.5,445.5 488.5,445.4 489.5,445.1 490.5,444.6 491.5,443.9 492.5,443.1 493.5,442.0 494.5,440.9 495.5,439.5 496.5,438.0 497.5,436.3 498.5,434.4 499.5,432.4 500.5,430.2 501.5,427.8 502.5,425.3 503.5,422.6 504.5,419.8 505.5,416.9 506.5,413.8 507.5,410.6 508.5,407.2 509.5,403.7 510.5,400.1 511.5,396.3 512.5,392.5 513.5,388.5 514.5,384.4 515.5,380.3 516.5,376.0 517.5,371.6 518.5,367.2 519.5,362.7 520.5,358.1 521.5,353.4 522.5,348.7 523.5,344.0 524.5,339.1 525.5,334.3 526.5,329.4 527.5,324.5 528.5,319.5 529.5,314.6 530.5,309.6 531.5,304.6 532.5,299.6 533.5,294.7 534.5,289.7 535.5,284.8 536.5,279.9 537.5,275.0 538.5,270.2 539.5,265.4 540.5,260.7 541.5,256.0 542.5,251.4 543.5,246.9 544.5,242.4 545.5,238.0 546.5,233.7 547.5,229.6 548.5,225.5 549.5,221.5 550.5,217.6 551.5,213.8 552.5,210.2 553.5,206.6 554.5,203.2 555.5,200.0 556.5,196.8 557.5,193.9 558.5,191.0 559.5,188.3 560.5,185.8 561.5,183.4 562.5,181.2 563.5,179.1 564.5,177.2 565.5,175.4 566.5,173.9 567.5,172.5 568.5,171.2 569.5,170.2 570.5,169.3 571.5,168.6 572.5,168.0 573.5,167.7 574.5,167.5 575.5,167.5 576.5,167.7 577.5,168.1 578.5,168.6 579.5,169.3 580.5,170.2 581.5,171.3 582.5,172.5 583.5,173.9 584.5,175.5 585.5,177.2 586.5,179.2 587.5,181.2 588.5,183.5 589.5,185.9 590.5,188.4 591.5,191.1 592.5,194.0 593.5,197.0 594.5,200.1 595.5,203.4 596.5,206.8 597.5,210.3 598.5,214.0 599.5,217.7 600.5,221.6 601.5,225.6 602.5,229.7 603.5,233.9 604.5,238.2 605.5,242.6 606.5,247.1 607.5,251.6 608.5,256.2 609.5,260.9 610.5,265.6 611.5,270.4 612.5,275.2 613.5,280.1 614.5,285.0 615.5,289.9 616.5,294.9 617.5,299.8 618.5,304.8 619.5,309.8 620.5,314.8 621.5,319.7 622.5,324.7 623.5,329.6 624.5,334.5 625.5,339.3 626.5,344.2 627.5,348.9 628.5,353.6 629.5,358.3 630.5,362.9 631.5,367.4 632.5,371.8 633.5,376.2 634.5,380.4 635.5,384.6 636.5,388.7 637.5,392.6 638.5,396.5 639.5,400.2 640.5,403.8 641.5,407.3 642.5,410.7 643.5,413.9 644.5,417.0 645.5,420.0 646.5,422.8 647.5,425.4 648.5,427.9 649.5,430.3 650.5,432.4 651.5,434.5 652.5,436.3 653.5,438.0 654.5,439.5 655.5,440.9 656.5,442.1 657.5,443.1 658.5,443.9 659.5,444.6 660.5,445.1 661.5,445.4 662.5,445.5 663.5,445.4 664.5,445.2 665.5,444.8 666.5,444.2 667.5,443.5 668.5,442.5 669.5,441.4 670.5,440.1 671.5,438.7 672.5,437.0 673.5,435.2 674.5,433.3 675.5,431.1 676.5,428.9 677.5,426.4 678.5,423.8 679.5,421.1 680.5,418.2 681.5,415.2 682.5,412.0 683.5,408.7 684.5,405.2 685.5,401.7 686.5,398.0 687.5,394.2 688.5,390.3 689.5,386.2 690.5,382.1 691.5,377.9 692.5,373.6 693.5,369.2 694.5,364.7 695.5,360.1 696.5,355.5 697.5,350.8 698.5,346.1 699.5,341.3 700.5,336.4 701.5,331.6 702.5,326.6 703.5,321.7 704.5,316.7 705.5,311.8 706.5,306.8 707.5,301.8 708.5,296.9 709.5,291.9 710.5,287.0 711.5,282.0 712.5,277.2 713.5,272.3 714.5,267.5 715.5,262.8 716.5,258.1 717.5,253.4 718.5,248.9 719.5,244.4 720.5,240.0 721.5,235.6 722.5,231.4 723.5,227.2 724.5,223.2 725.5,219.3 726.5,215.5 727.5,211.8 728.5,208.2 729.5,204.7 730.5,201.4 731.5,198.2 732.5,195.2 733.5,192.2 734.5,189.5 735.5,186.9 736.5,184.4 737.5,182.1 738.5,180.0 739.5,178.0 740.5,176.2 741.5,174.5 742.5,173.1 743.5,171.7 744.5,170.6 745.5,169.7 746.5,168.9 747.5,168.3 748.5,167.8 749.5,167.6 750.5,167.5 751.5,167.6 752.5,167.9 753.5,168.3 754.5,169.0 755.5,169.8 756.5,170.8 757.5,171.9 758.5,173.3 759.5,174.8 760.5,176.5 761.5,178.3 762.5,180.3 763.5,182.5 764.5,184.8 765.5,187.3 766.5,189.9 767.5,192.7 768.5,195.6 769.5,198.7 770.5,201.9 771.5,205.3 772.5,208.7 773.5,212.3 774.5,216.1 775.5,219.9 776.5,223.9 777.5,227.9 778.5,232.1 779.5,236.3 780.5,240.7 781.5,245.1 782.5,249.6 783.5,254.2 784.5,258.8 785.5,263.5 786.5,268.3 787.5,273.1" fill="none" stroke="#80FF80" stroke-width="1.15" shape-rendering="crispEdges"/>
<polyline points="5.5,303.5 6.5,299.3 7.5,295.1 8.5,290.9 9.5,286.7 10.5,282.5 11.5,278.3 12.5,274.2 13.5,270.1 14.5,266.0 15.5,262.0 16.5,258.0 17.5,254.1 18.5,250.2 19.5,246.3 20.5,242.5 21.5,238.8 22.5,235.1 23.5,231.5 24.5,228.0 25.5,224.5 26.5,221.2 27.5,217.9 28.5,214.6 29.5,211.5 30.5,208.5 31.5,205.5 32.5,202.6 33.5,199.9 34.5,197.2 35.5,194.6 36.5,192.2 37.5,189.8 38.5,187.6 39.5,185.4 40.5,183.4 41.5,181.5 42.5,179.7 43.5,178.0 44.5,176.5 45.5,175.0 46.5,173.7 47.5,172.5 48.5,171.5 49.5,170.5 50.5,169.7 51.5,169.0 52.5,168.5 53.5,168.0 54.5,167.7 55.5,167.5 56.5,167.5 57.5,167.6 58.5,167.8 59.5,168.1 60.5,168.6 61.5,169.2 62.5,169.9 63.5,170.8 64.5,171.8 65.5,172.9 66.5,174.1 67.5,175.4 68.5,176.9 69.5,178.5 70.5,180.2 71.5,182.0 72.5,184.0 73.5,186.0 74.5,188.2 75.5,190.5 76.5,192.9 77.5,195.3 78.5,197.9 79.5,200.6 80.5,203.4 81.5,206.3 82.5,209.3 83.5,212.4 84.5,215.5 85.5,218.8 86.5,222.1 87.5,225.5 88.5,229.0 89.5,232.5 90.5,236.1 91.5,239.8 92.5,243.6 93.5,247.4 94.5,251.2 95.5,255.2 96.5,259.1 97.5,263.1 98.5,267.2 99.5,271.2 100.5,275.3 101.5,279.5 102.5,283.7 103.5,287.8 104.5,292.0 105.5,296.3 106.5,300.5 107.5,304.7 108.5,309.0 109.5,313.2 110.5,317.4 111.5,321.6 112.5,325.8 113.5,330.0 114.5,334.2 115.5,338.3 116.5,342.4 117.5,346.5 118.5,350.5 119.5,354.5 120.5,358.5 121.5,362.4 122.5,366.2 123.5,370.0 124.5,373.8 125.5,377.4 126.5,381.0 127.5,384.6 128.5,388.1 129.5,391.4 130.5,394.8 131.5,398.0 132.5,401.1 133.5,404.2 134.5,407.2 135.5,410.0 136.5,412.8 137.5,415.5 138.5,418.1 139.5,420.5 140.5,422.9 141.5,425.2 142.5,427.3 143.5,429.4 144.5,431.3 145.5,433.1 146.5,434.8 147.5,436.3 148.5,437.8 149.5,439.1 150.5,440.3 151.5,441.4 152.5,442.4 153.5,443.2 154.5,443.9 155.5,444.5 156.5,444.9 157.5,445.2 158.5,445.4 159.5,445.5 160.5,445.4 161.5,445.2 162.5,444.9 163.5,444.5 164.5,443.9 165.5,443.2 166.5,442.3 167.5,441.4 168.5,440.3 169.5,439.1 170.5,437.7 171.5,436.3 172.5,434.7 173.5,433.0 174.5,431.2 175.5,429.3 176.5,427.2 177.5,425.1 178.5,422.8 179.5,420.4 180.5,418.0 181.5,415.4 182.5,412.7 183.5,409.9 184.5,407.0 185.5,404.1 186.5,401.0 187.5,397.9 188.5,394.6 189.5,391.3 190.5,387.9 191.5,384.4 192.5,380.9 193.5,377.3 194.5,373.6 195.5,369.9 196.5,366.1 197.5,362.2 198.5,358.3 199.5,354.4 200.5,350.4 201.5,346.3 202.5,342.3 203.5,338.1 204.5,334.0 205.5,329.8 206.5,325.7 207.5,321.5 208.5,317.2 209.5,313.0 210.5,308.8 211.5,304.6 212.5,300.3 213.5,296.1 214.5,291.9 215.5,287.7 216.5,283.5 217.5,279.3 218.5,275.2 219.5,271.1 220.5,267.0 221.5,263.0 222.5,259.0 223.5,255.0 224.5,251.1 225.5,247.2 226.5,243.4 227.5,239.7 228.5,236.0 229.5,232.4 230.5,228.8 231.5,225.4 232.5,222.0 233.5,218.6 234.5,215.4 235.5,212.2 236.5,209.2 237.5,206.2 238.5,203.3 239.5,200.5 240.5,197.8 241.5,195.2 242.5,192.8 243.5,190.4 244.5,188.1 245.5,185.9 246.5,183.9 247.5,182.0 248.5,180.1 249.5,178.4 250.5,176.8 251.5,175.4 252.5,174.0 253.5,172.8 254.5,171.7 255.5,170.7 256.5,169.9 257.5,169.2 258.5,168.6 259.5,168.1 260.5,167.8 261.5,167.6 262.5,167.5 263.5,167.6 264.5,167.7 265.5,168.0 266.5,168.5 267.5,169.0 268.5,169.7 269.5,170.6 270.5,171.5 271.5,172.6 272.5,173.8 273.5,175.1 274.5,176.5 275.5,178.1 276.5,179.8 277.5,181.6 278.5,183.5 279.5,185.5 280.5,187.7 281.5,189.9 282.5,192.3 283.5,194.7 284.5,197.3 285.5,200.0 286.5,202.7 287.5,205.6 288.5,208.6 289.5,211.6 290.5,214.8 291.5,218.0 292.5,221.3 293.5,224.7 294.5,228.1 295.5,231.7 296.5,235.3 297.5,238.9 298.5,242.7 299.5,246.5 300.5,250.3 301.5,254.2 302.5,258.2 303.5,262.1 304.5,266.2 305.5,270.3 306.5,274.4 307.5,278.5 308.5,282.7 309.5,286.8 310.5,291.0 311.5,295.2 312.5,299.5 313.5,303.7 314.5,307.9 315.5,312.2 316.5,316.4 317.5,320.6 318.5,324.8 319.5,329.0 320.5,333.2 321.5,337.3 322.5,341.4 323.5,345.5 324.5,349.6 325.5,353.6 326.5,357.5 327.5,361.4 328.5,365.3 329.5,369.1 330.5,372.9 331.5,376.6 332.5,380.2 333.5,383.7 334.5,387.2 335.5,390.6 336.5,394.0 337.5,397.2 338.5,400.4 339.5,403.5 340.5,406.5 341.5,409.3 342.5,412.1 343.5,414.8 344.5,417.5 345.5,420.0 346.5,422.3 347.5,424.6 348.5,426.8 349.5,428.9 350.5,430.8 351.5,432.7 352.5,434.4 353.5,436.0 354.5,437.5 355.5,438.8 356.5,440.1 357.5,441.2 358.5,442.2 359.5,443.0 360.5,443.7 361.5,444.4 362.5,444.8 363.5,445.2 364.5,445.4 365.5,445.5 366.5,445.5 367.5,445.3 368.5,445.0 369.5,444.6 370.5,444.0 371.5,443.4 372.5,442.5 373.5,441.6 374.5,440.6 375.5,439.4 376.5,438.1 377.5,436.6 378.5,435.1 379.5,433.4 380.5,431.6 381.5,429.7 382.5,427.7 383.5,425.6 384.5,423.4 385.5,421.0 386.5,418.6 387.5,416.0 388.5,413.3 389.5,410.6 390.5,407.7 391.5,404.8 392.5,401.7 393.5,398.6 394.5,395.4 395.5,392.1 396.5,388.7 397.5,385.3 398.5,381.8 399.5,378.2 400.5,374.5 401.5,370.8 402.5,367.0 403.5,363.2 404.5,359.3 405.5,355.3 406.5,351.3 407.5,347.3 408.5,343.2 409.5,339.1 410.5,335.0 411.5,330.9 412.5,326.7 413.5,322.5 414.5,318.3 415.5,314.0 416.5,309.8 417.5,305.6 418.5,301.3 419.5,297.1 420.5,292.9 421.5,288.7 422.5,284.5 423.5,280.3 424.5,276.2 425.5,272.1 426.5,268.0 427.5,263.9 428.5,259.9 429.5,255.9 430.5,252.0 431.5,248.1 432.5,244.3 433.5,240.6 434.5,236.9 435.5,233.2 436.5,229.7 437.5,226.2 438.5,222.8 439.5,219.4 440.5,216.2 441.5,213.0 442.5,209.9 443.5,206.9 444.5,204.0 445.5,201.2 446.5,198.5 447.5,195.9 448.5,193.3 449.5,190.9 450.5,188.6 451.5,186.4 452.5,184.4 453.5,182.4 454.5,180.6 455.5,178.8 456.5,177.2 457.5,175.7 458.5,174.3 459.5,173.1 460.5,172.0 461.5,171.0 462.5,170.1 463.5,169.3 464.5,168.7 465.5,168.2 466.5,167.9 467.5,167.6 468.5,167.5 469.5,167.5 470.5,167.7 471.5,168.0 472.5,168.4 473.5,168.9 474.5,169.6 475.5,170.4 476.5,171.3 477.5,172.3 478.5,173.5 479.5,174.8 480.5,176.2 481.5,177.7 482.5,179.4 483.5,181.1 484.5,183.0 485.5,185.0 486.5,187.1 487.5,189.4 488.5,191.7 489.5,194.1 490.5,196.7 491.5,199.3 492.5,202.1 493.5,204.9 494.5,207.9 495.5,210.9 496.5,214.0 497.5,217.2 498.5,220.5 499.5,223.9 500.5,227.3 501.5,230.8 502.5,234.4 503.5,238.1 504.5,241.8 505.5,245.5 506.5,249.4 507.5,253.3 508.5,257.2 509.5,261.2 510.5,265.2 511.5,269.3 512.5,273.4 513.5,277.5 514.5,281.6 515.5,285.8 516.5,290.0 517.5,294.2 518.5,298.5 519.5,302.7 520.5,306.9 521.5,311.2 522.5,315.4 523.5,319.6 524.5,323.8 525.5,328.0 526.5,332.2 527.5,336.3 528.5,340.5 529.5,344.5 530.5,348.6 531.5,352.6 532.5,356.6 533.5,360.5 534.5,364.4 535.5,368.2 536.5,372.0 537.5,375.7 538.5,379.3 539.5,382.9 540.5,386.4 541.5,389.8 542.5,393.2 543.5,396.4 544.5,399.6 545.5,402.7 546.5,405.7 547.5,408.7 548.5,411.5 549.5,414.2 550.5,416.8 551.5,419.4 552.5,421.8 553.5,424.1 554.5,426.3 555.5,428.4 556.5,430.4 557.5,432.2 558.5,434.0 559.5,435.6 560.5,437.1 561.5,438.5 562.5,439.8 563.5,440.9 564.5,441.9 565.5,442.8 566.5,443.6 567.5,444.2 568.5,444.7 569.5,445.1 570.5,445.4 571.5,445.5 572.5,445.5 573.5,445.3 574.5,445.1 575.5,444.7 576.5,444.2 577.5,443.5 578.5,442.8 579.5,441.8 580.5,440.8 581.5,439.7 582.5,438.4 583.5,437.0 584.5,435.5 585.5,433.8 586.5,432.1 587.5,430.2 588.5,428.2 589.5,426.1 590.5,423.9 591.5,421.6 592.5,419.2 593.5,416.6 594.5,414.0 595.5,411.3 596.5,408.4 597.5,405.5 598.5,402.5 599.5,399.4 600.5,396.2 601.5,392.9 602.5,389.6 603.5,386.1 604.5,382.6 605.5,379.0 606.5,375.4 607.5,371.7 608.5,367.9 609.5,364.1 610.5,360.2 611.5,356.3 612.5,352.3 613.5,348.3 614.5,344.2 615.5,340.1 616.5,336.0 617.5,331.9 618.5,327.7 619.5,323.5 620.5,319.3 621.5,315.0 622.5,310.8 623.5,306.6 624.5,302.4 625.5,298.1 626.5,293.9 627.5,289.7 628.5,285.5 629.5,281.3 630.5,277.2 631.5,273.0 632.5,268.9 633.5,264.9 634.5,260.9 635.5,256.9 636.5,253.0 637.5,249.1 638.5,245.2 639.5,241.5 640.5,237.8 641.5,234.1 642.5,230.5 643.5,227.0 644.5,223.6 645.5,220.2 646.5,216.9 647.5,213.7 648.5,210.6 649.5,207.6 650.5,204.7 651.5,201.9 652.5,199.1 653.5,196.5 654.5,193.9 655.5,191.5 656.5,189.2 657.5,187.0 658.5,184.9 659.5,182.9 660.5,181.0 661.5,179.2 662.5,177.6 663.5,176.1 664.5,174.7 665.5,173.4 666.5,172.2 667.5,171.2 668.5,170.3 669.5,169.5 670.5,168.9 671.5,168.3 672.5,167.9 673.5,167.7 674.5,167.5 675.5,167.5 676.5,167.6 677.5,167.9 678.5,168.3 679.5,168.8 680.5,169.4 681.5,170.2 682.5,171.0 683.5,172.0 684.5,173.2 685.5,174.4 686.5,175.8 687.5,177.3 688.5,179.0 689.5,180.7 690.5,182.6 691.5,184.5 692.5,186.6 693.5,188.8 694.5,191.1 695.5,193.5 696.5,196.1 697.5,198.7 698.5,201.4 699.5,204.2 700.5,207.1 701.5,210.1 702.5,213.2 703.5,216.4 704.5,219.7 705.5,223.0 706.5,226.5 707.5,230.0 708.5,233.5 709.5,237.2 710.5,240.9 711.5,244.6 712.5,248.5 713.5,252.3 714.5,256.3 715.5,260.2 716.5,264.2 717.5,268.3 718.5,272.4 719.5,276.5 720.5,280.7 721.5,284.8 722.5,289.0 723.5,293.2 724.5,297.4 725.5,301.7 726.5,305.9 727.5,310.1 728.5,314.4 729.5,318.6 730.5,322.8 731.5,327.0 732.5,331.2 733.5,335.3 734.5,339.5 735.5,343.6 736.5,347.6 737.5,351.7 738.5,355.6 739.5,359.6 740.5,363.5 741.5,367.3 742.5,371.1 743.5,374.8 744.5,378.5 745.5,382.0 746.5,385.6 747.5,389.0 748.5,392.4 749.5,395.7 750.5,398.9 751.5,402.0 752.5,405.0 753.5,408.0 754.5,410.8 755.5,413.6 756.5,416.2 757.5,418.8 758.5,421.2 759.5,423.5 760.5,425.8 761.5,427.9 762.5,429.9 763.5,431.8 764.5,433.6 765.5,435.2 766.5,436.8 767.5,438.2 768.5,439.5 769.5,440.6 770.5,441.7 771.5,442.6 772.5,443.4 773.5,444.1 774.5,444.6 775.5,445.0 776.5,445.3 777.5,445.5 778.5,445.5 779.5,445.4 780.5,445.2 781.5,444.8 782.5,444.3 783.5,443.7 784.5,442.9 785.5,442.1 786.5,441.1 787.5,440.0" fill="none" stroke="#0068B8" stroke-width="1.15" shape-rendering="crispEdges"/>
<polyline points="5.5,304.0 6.5,300.4 7.5,296.7 8.5,293.1 9.5,289.5 10.5,286.0 11.5,282.4 12.5,278.8 13.5,275.3 14.5,271.8 15.5,268.3 16.5,264.8 17.5,261.4 18.5,258.0 19.5,254.6 20.5,251.3 21.5,248.0 22.5,244.7 23.5,241.5 24.5,238.3 25.5,235.2 26.5,232.1 27.5,229.1 28.5,226.1 29.5,223.2 30.5,220.3 31.5,217.5 32.5,214.8 33.5,212.1 34.5,209.5 35.5,206.9 36.5,204.4 37.5,202.0 38.5,199.7 39.5,197.4 40.5,195.2 41.5,193.0 42.5,191.0 43.5,189.0 44.5,187.1 45.5,185.3 46.5,183.6 47.5,181.9 48.5,180.4 49.5,178.9 50.5,177.5 51.5,176.2 52.5,175.0 53.5,173.9 54.5,172.8 55.5,171.9 56.5,171.0 57.5,170.3 58.5,169.6 59.5,169.0 60.5,168.5 61.5,168.1 62.5,167.8 63.5,167.6 64.5,167.5 65.5,167.5 66.5,167.6 67.5,167.8 68.5,168.0 69.5,168.4 70.5,168.8 71.5,169.4 72.5,170.0 73.5,170.7 74.5,171.6 75.5,172.5 76.5,173.5 77.5,174.6 78.5,175.8 79.5,177.0 80.5,178.4 81.5,179.9 82.5,181.4 83.5,183.0 84.5,184.7 85.5,186.5 86.5,188.4 87.5,190.3 88.5,192.3 89.5,194.4 90.5,196.6 91.5,198.8 92.5,201.2 93.5,203.6 94.5,206.0 95.5,208.6 96.5,211.2 97.5,213.8 98.5,216.6 99.5,219.3 100.5,222.2 101.5,225.1 102.5,228.0 103.5,231.1 104.5,234.1 105.5,237.2 106.5,240.4 107.5,243.6 108.5,246.8 109.5,250.1 110.5,253.5 111.5,256.8 112.5,260.2 113.5,263.6 114.5,267.1 115.5,270.6 116.5,274.1 117.5,277.6 118.5,281.1 119.5,284.7 120.5,288.3 121.5,291.9 122.5,295.5 123.5,299.1 124.5,302.7 125.5,306.3 126.5,309.9 127.5,313.5 128.5,317.2 129.5,320.8 130.5,324.4 131.5,327.9 132.5,331.5 133.5,335.0 134.5,338.6 135.5,342.1 136.5,345.6 137.5,349.0 138.5,352.5 139.5,355.8 140.5,359.2 141.5,362.5 142.5,365.8 143.5,369.1 144.5,372.3 145.5,375.5 146.5,378.6 147.5,381.6 148.5,384.7 149.5,387.6 150.5,390.5 151.5,393.4 152.5,396.2 153.5,398.9 154.5,401.6 155.5,404.2 156.5,406.7 157.5,409.2 158.5,411.6 159.5,413.9 160.5,416.2 161.5,418.4 162.5,420.5 163.5,422.5 164.5,424.5 165.5,426.3 166.5,428.1 167.5,429.8 168.5,431.5 169.5,433.0 170.5,434.5 171.5,435.8 172.5,437.1 173.5,438.3 174.5,439.4 175.5,440.4 176.5,441.3 177.5,442.2 178.5,442.9 179.5,443.6 180.5,444.1 181.5,444.6 182.5,444.9 183.5,445.2 184.5,445.4 185.5,445.5 186.5,445.5 187.5,445.4 188.5,445.2 189.5,444.9 190.5,444.5 191.5,444.0 192.5,443.5 193.5,442.8 194.5,442.1 195.5,441.2 196.5,440.3 197.5,439.2 198.5,438.1 199.5,436.9 200.5,435.6 201.5,434.2 202.5,432.8 203.5,431.2 204.5,429.6 205.5,427.9 206.5,426.1 207.5,424.2 208.5,422.2 209.5,420.2 210.5,418.0 211.5,415.8 212.5,413.6 213.5,411.2 214.5,408.8 215.5,406.3 216.5,403.8 217.5,401.2 218.5,398.5 219.5,395.8 220.5,393.0 221.5,390.1 222.5,387.2 223.5,384.2 224.5,381.2 225.5,378.1 226.5,375.0 227.5,371.8 228.5,368.6 229.5,365.3 230.5,362.0 231.5,358.7 232.5,355.3 233.5,351.9 234.5,348.5 235.5,345.0 236.5,341.6 237.5,338.0 238.5,334.5 239.5,331.0 240.5,327.4 241.5,323.8 242.5,320.2 243.5,316.6 244.5,313.0 245.5,309.4 246.5,305.8 247.5,302.2 248.5,298.5 249.5,294.9 250.5,291.3 251.5,287.8 252.5,284.2 253.5,280.6 254.5,277.1 255.5,273.5 256.5,270.0 257.5,266.6 258.5,263.1 259.5,259.7 260.5,256.3 261.5,253.0 262.5,249.6 263.5,246.4 264.5,243.1 265.5,239.9 266.5,236.8 267.5,233.7 268.5,230.6 269.5,227.6 270.5,224.7 271.5,221.8 272.5,218.9 273.5,216.1 274.5,213.4 275.5,210.8 276.5,208.2 277.5,205.7 278.5,203.2 279.5,200.8 280.5,198.5 281.5,196.3 282.5,194.1 283.5,192.0 284.5,190.0 285.5,188.1 286.5,186.2 287.5,184.4 288.5,182.8 289.5,181.1 290.5,179.6 291.5,178.2 292.5,176.8 293.5,175.6 294.5,174.4 295.5,173.3 296.5,172.3 297.5,171.4 298.5,170.6 299.5,169.9 300.5,169.3 301.5,168.8 302.5,168.3 303.5,168.0 304.5,167.7 305.5,167.6 306.5,167.5 307.5,167.5 308.5,167.7 309.5,167.9 310.5,168.2 311.5,168.6 312.5,169.1 313.5,169.7 314.5,170.4 315.5,171.1 316.5,172.0 317.5,173.0 318.5,174.0 319.5,175.2 320.5,176.4 321.5,177.7 322.5,179.1 323.5,180.6 324.5,182.2 325.5,183.8 326.5,185.6 327.5,187.4 328.5,189.3 329.5,191.3 330.5,193.4 331.5,195.5 332.5,197.7 333.5,200.0 334.5,202.4 335.5,204.8 336.5,207.3 337.5,209.9 338.5,212.5 339.5,215.2 340.5,217.9 341.5,220.8 342.5,223.6 343.5,226.6 344.5,229.5 345.5,232.6 346.5,235.7 347.5,238.8 348.5,242.0 349.5,245.2 350.5,248.5 351.5,251.8 352.5,255.1 353.5,258.5 354.5,261.9 355.5,265.4 356.5,268.8 357.5,272.3 358.5,275.8 359.5,279.4 360.5,282.9 361.5,286.5 362.5,290.1 363.5,293.7 364.5,297.3 365.5,300.9 366.5,304.5 367.5,308.1 368.5,311.7 369.5,315.4 370.5,319.0 371.5,322.6 372.5,326.1 373.5,329.7 374.5,333.3 375.5,336.8 376.5,340.3 377.5,343.8 378.5,347.3 379.5,350.7 380.5,354.2 381.5,357.5 382.5,360.9 383.5,364.2 384.5,367.5 385.5,370.7 386.5,373.9 387.5,377.0 388.5,380.1 389.5,383.2 390.5,386.1 391.5,389.1 392.5,392.0 393.5,394.8 394.5,397.5 395.5,400.2 396.5,402.9 397.5,405.5 398.5,408.0 399.5,410.4 400.5,412.8 401.5,415.1 402.5,417.3 403.5,419.4 404.5,421.5 405.5,423.5 406.5,425.4 407.5,427.2 408.5,429.0 409.5,430.7 410.5,432.2 411.5,433.7 412.5,435.2 413.5,436.5 414.5,437.7 415.5,438.9 416.5,439.9 417.5,440.9 418.5,441.8 419.5,442.6 420.5,443.3 421.5,443.9 422.5,444.4 423.5,444.8 424.5,445.1 425.5,445.3 426.5,445.5 427.5,445.5 428.5,445.4 429.5,445.3 430.5,445.1 431.5,444.7 432.5,444.3 433.5,443.8 434.5,443.2 435.5,442.4 436.5,441.6 437.5,440.8 438.5,439.8 439.5,438.7 440.5,437.5 441.5,436.3 442.5,434.9 443.5,433.5 444.5,432.0 445.5,430.4 446.5,428.7 447.5,427.0 448.5,425.1 449.5,423.2 450.5,421.2 451.5,419.1 452.5,417.0 453.5,414.7 454.5,412.4 455.5,410.0 456.5,407.6 457.5,405.1 458.5,402.5 459.5,399.8 460.5,397.1 461.5,394.4 462.5,391.5 463.5,388.6 464.5,385.7 465.5,382.7 466.5,379.6 467.5,376.5 468.5,373.4 469.5,370.2 470.5,367.0 471.5,363.7 472.5,360.4 473.5,357.0 474.5,353.6 475.5,350.2 476.5,346.8 477.5,343.3 478.5,339.8 479.5,336.3 480.5,332.7 481.5,329.2 482.5,325.6 483.5,322.0 484.5,318.4 485.5,314.8 486.5,311.2 487.5,307.6 488.5,304.0 489.5,300.4 490.5,296.7 491.5,293.1 492.5,289.5 493.5,286.0 494.5,282.4 495.5,278.8 496.5,275.3 497.5,271.8 498.5,268.3 499.5,264.8 500.5,261.4 501.5,258.0 502.5,254.6 503.5,251.3 504.5,248.0 505.5,244.7 506.5,241.5 507.5,238.3 508.5,235.2 509.5,232.1 510.5,229.1 511.5,226.1 512.5,223.2 513.5,220.3 514.5,217.5 515.5,214.8 516.5,212.1 517.5,209.5 518.5,206.9 519.5,204.4 520.5,202.0 521.5,199.7 522.5,197.4 523.5,195.2 524.5,193.0 525.5,191.0 526.5,189.0 527.5,187.1 528.5,185.3 529.5,183.6 530.5,181.9 531.5,180.4 532.5,178.9 533.5,177.5 534.5,176.2 535.5,175.0 536.5,173.9 537.5,172.8 538.5,171.9 539.5,171.0 540.5,170.3 541.5,169.6 542.5,169.0 543.5,168.5 544.5,168.1 545.5,167.8 546.5,167.6 547.5,167.5 548.5,167.5 549.5,167.6 550.5,167.8 551.5,168.0 552.5,168.4 553.5,168.8 554.5,169.4 555.5,170.0 556.5,170.7 557.5,171.6 558.5,172.5 559.5,173.5 560.5,174.6 561.5,175.8 562.5,177.0 563.5,178.4 564.5,179.9 565.5,181.4 566.5,183.0 567.5,184.7 568.5,186.5 569.5,188.4 570.5,190.3 571.5,192.3 572.5,194.4 573.5,196.6 574.5,198.8 575.5,201.2 576.5,203.6 577.5,206.0 578.5,208.6 579.5,211.2 580.5,213.8 581.5,216.6 582.5,219.3 583.5,222.2 584.5,225.1 585.5,228.0 586.5,231.1 587.5,234.1 588.5,237.2 589.5,240.4 590.5,243.6 591.5,246.8 592.5,250.1 593.5,253.5 594.5,256.8 595.5,260.2 596.5,263.6 597.5,267.1 598.5,270.6 599.5,274.1 600.5,277.6 601.5,281.1 602.5,284.7 603.5,288.3 604.5,291.9 605.5,295.5 606.5,299.1 607.5,302.7 608.5,306.3 609.5,309.9 610.5,313.5 611.5,317.2 612.5,320.8 613.5,324.4 614.5,327.9 615.5,331.5 616.5,335.0 617.5,338.6 618.5,342.1 619.5,345.6 620.5,349.0 621.5,352.5 622.5,355.8 623.5,359.2 624.5,362.5 625.5,365.8 626.5,369.1 627.5,372.3 628.5,375.5 629.5,378.6 630.5,381.6 631.5,384.7 632.5,387.6 633.5,390.5 634.5,393.4 635.5,396.2 636.5,398.9 637.5,401.6 638.5,404.2 639.5,406.7 640.5,409.2 641.5,411.6 642.5,413.9 643.5,416.2 644.5,418.4 645.5,420.5 646.5,422.5 647.5,424.5 648.5,426.3 649.5,428.1 650.5,429.8 651.5,431.5 652.5,433.0 653.5,434.5 654.5,435.8 655.5,437.1 656.5,438.3 657.5,439.4 658.5,440.4 659.5,441.3 660.5,442.2 661.5,442.9 662.5,443.6 663.5,444.1 664.5,444.6 665.5,444.9 666.5,445.2 667.5,445.4 668.5,445.5 669.5,445.5 670.5,445.4 671.5,445.2 672.5,444.9 673.5,444.5 674.5,444.0 675.5,443.5 676.5,442.8 677.5,442.1 678.5,441.2 679.5,440.3 680.5,439.2 681.5,438.1 682.5,436.9 683.5,435.6 684.5,434.2 685.5,432.8 686.5,431.2 687.5,429.6 688.5,427.9 689.5,426.1 690.5,424.2 691.5,422.2 692.5,420.2 693.5,418.0 694.5,415.8 695.5,413.6 696.5,411.2 697.5,408.8 698.5,406.3 699.5,403.8 700.5,401.2 701.5,398.5 702.5,395.8 703.5,393.0 704.5,390.1 705.5,387.2 706.5,384.2 707.5,381.2 708.5,378.1 709.5,375.0 710.5,371.8 711.5,368.6 712.5,365.3 713.5,362.0 714.5,358.7 715.5,355.3 716.5,351.9 717.5,348.5 718.5,345.0 719.5,341.6 720.5,338.0 721.5,334.5 722.5,331.0 723.5,327.4 724.5,323.8 725.5,320.2 726.5,316.6 727.5,313.0 728.5,309.4 729.5,305.8 730.5,302.2 731.5,298.5 732.5,294.9 733.5,291.3 734.5,287.8 735.5,284.2 736.5,280.6 737.5,277.1 738.5,273.5 739.5,270.0 740.5,266.6 741.5,263.1 742.5,259.7 743.5,256.3 744.5,253.0 745.5,249.6 746.5,246.4 747.5,243.1 748.5,239.9 749.5,236.8 750.5,233.7 751.5,230.6 752.5,227.6 753.5,224.7 754.5,221.8 755.5,218.9 756.5,216.1 757.5,213.4 758.5,210.8 759.5,208.2 760.5,205.7 761.5,203.2 762.5,200.8 763.5,198.5 764.5,196.3 765.5,194.1 766.5,192.0 767.5,190.0 768.5,188.1 769.5,186.2 770.5,184.4 771.5,182.8 772.5,181.1 773.5,179.6 774.5,178.2 775.5,176.8 776.5,175.6 777.5,174.4 778.5,173.3 779.5,172.3 780.5,171.4 781.5,170.6 782.5,169.9 783.5,169.3 784.5,168.8 785.5,168.3 786.5,168.0 787.5,167.7" fill="none" stroke="#FF8020" stroke-width="1.15" shape-rendering="crispEdges"/>
<polyline points="5.5,304.5 6.5,301.7 7.5,298.9 8.5,296.1 9.5,293.3 10.5,290.5 11.5,287.7 12.5,284.9 13.5,282.1 14.5,279.3 15.5,276.6 16.5,273.8 17.5,271.1 18.5,268.4 19.5,265.7 20.5,263.0 21.5,260.3 22.5,257.7 23.5,255.1 24.5,252.5 25.5,249.9 26.5,247.3 27.5,244.8 28.5,242.3 29.5,239.8 30.5,237.3 31.5,234.9 32.5,232.5 33.5,230.1 34.5,227.8 35.5,225.5 36.5,223.2 37.5,221.0 38.5,218.8 39.5,216.6 40.5,214.5 41.5,212.4 42.5,210.3 43.5,208.3 44.5,206.3 45.5,204.4 46.5,202.5 47.5,200.7 48.5,198.9 49.5,197.1 50.5,195.4 51.5,193.7 52.5,192.1 53.5,190.5 54.5,189.0 55.5,187.5 56.5,186.1 57.5,184.7 58.5,183.4 59.5,182.1 60.5,180.8 61.5,179.7 62.5,178.5 63.5,177.5 64.5,176.4 65.5,175.5 66.5,174.6 67.5,173.7 68.5,172.9 69.5,172.2 70.5,171.5 71.5,170.8 72.5,170.2 73.5,169.7 74.5,169.2 75.5,168.8 76.5,168.5 77.5,168.2 78.5,167.9 79.5,167.7 80.5,167.6 81.5,167.5 82.5,167.5 83.5,167.5 84.5,167.6 85.5,167.8 86.5,168.0 87.5,168.3 88.5,168.6 89.5,169.0 90.5,169.4 91.5,169.9 92.5,170.5 93.5,171.1 94.5,171.7 95.5,172.4 96.5,173.2 97.5,174.0 98.5,174.9 99.5,175.9 100.5,176.9 101.5,177.9 102.5,179.0 103.5,180.1 104.5,181.3 105.5,182.6 106.5,183.9 107.5,185.2 108.5,186.6 109.5,188.1 110.5,189.6 111.5,191.1 112.5,192.7 113.5,194.4 114.5,196.1 115.5,197.8 116.5,199.6 117.5,201.4 118.5,203.3 119.5,205.2 120.5,207.1 121.5,209.1 122.5,211.1 123.5,213.2 124.5,215.3 125.5,217.5 126.5,219.6 127.5,221.9 128.5,224.1 129.5,226.4 130.5,228.7 131.5,231.1 132.5,233.5 133.5,235.9 134.5,238.3 135.5,240.8 136.5,243.3 137.5,245.8 138.5,248.3 139.5,250.9 140.5,253.5 141.5,256.1 142.5,258.8 143.5,261.4 144.5,264.1 145.5,266.8 146.5,269.5 147.5,272.2 148.5,274.9 149.5,277.7 150.5,280.5 151.5,283.2 152.5,286.0 153.5,288.8 154.5,291.6 155.5,294.4 156.5,297.2 157.5,300.0 158.5,302.8 159.5,305.7 160.5,308.5 161.5,311.3 162.5,314.1 163.5,316.9 164.5,319.7 165.5,322.5 166.5,325.3 167.5,328.1 168.5,330.9 169.5,333.7 170.5,336.4 171.5,339.2 172.5,341.9 173.5,344.6 174.5,347.3 175.5,350.0 176.5,352.7 177.5,355.3 178.5,357.9 179.5,360.5 180.5,363.1 181.5,365.7 182.5,368.2 183.5,370.7 184.5,373.2 185.5,375.7 186.5,378.1 187.5,380.5 188.5,382.9 189.5,385.2 190.5,387.5 191.5,389.8 192.5,392.0 193.5,394.2 194.5,396.4 195.5,398.5 196.5,400.6 197.5,402.7 198.5,404.7 199.5,406.7 200.5,408.6 201.5,410.5 202.5,412.3 203.5,414.1 204.5,415.9 205.5,417.6 206.5,419.3 207.5,420.9 208.5,422.5 209.5,424.0 210.5,425.5 211.5,426.9 212.5,428.3 213.5,429.6 214.5,430.9 215.5,432.2 216.5,433.3 217.5,434.5 218.5,435.5 219.5,436.6 220.5,437.5 221.5,438.4 222.5,439.3 223.5,440.1 224.5,440.8 225.5,441.5 226.5,442.2 227.5,442.8 228.5,443.3 229.5,443.8 230.5,444.2 231.5,444.5 232.5,444.8 233.5,445.1 234.5,445.3 235.5,445.4 236.5,445.5 237.5,445.5 238.5,445.5 239.5,445.4 240.5,445.2 241.5,445.0 242.5,444.7 243.5,444.4 244.5,444.0 245.5,443.6 246.5,443.1 247.5,442.5 248.5,441.9 249.5,441.3 250.5,440.6 251.5,439.8 252.5,439.0 253.5,438.1 254.5,437.1 255.5,436.1 256.5,435.1 257.5,434.0 258.5,432.9 259.5,431.7 260.5,430.4 261.5,429.1 262.5,427.8 263.5,426.4 264.5,424.9 265.5,423.4 266.5,421.9 267.5,420.3 268.5,418.6 269.5,416.9 270.5,415.2 271.5,413.4 272.5,411.6 273.5,409.7 274.5,407.8 275.5,405.9 276.5,403.9 277.5,401.9 278.5,399.8 279.5,397.7 280.5,395.5 281.5,393.4 282.5,391.1 283.5,388.9 284.5,386.6 285.5,384.3 286.5,381.9 287.5,379.5 288.5,377.1 289.5,374.7 290.5,372.2 291.5,369.7 292.5,367.2 293.5,364.7 294.5,362.1 295.5,359.5 296.5,356.9 297.5,354.2 298.5,351.6 299.5,348.9 300.5,346.2 301.5,343.5 302.5,340.8 303.5,338.1 304.5,335.3 305.5,332.5 306.5,329.8 307.5,327.0 308.5,324.2 309.5,321.4 310.5,318.6 311.5,315.8 312.5,313.0 313.5,310.2 314.5,307.3 315.5,304.5 316.5,301.7 317.5,298.9 318.5,296.1 319.5,293.3 320.5,290.5 321.5,287.7 322.5,284.9 323.5,282.1 324.5,279.3 325.5,276.6 326.5,273.8 327.5,271.1 328.5,268.4 329.5,265.7 330.5,263.0 331.5,260.3 332.5,257.7 333.5,255.1 334.5,252.5 335.5,249.9 336.5,247.3 337.5,244.8 338.5,242.3 339.5,239.8 340.5,237.3 341.5,234.9 342.5,232.5 343.5,230.1 344.5,227.8 345.5,225.5 346.5,223.2 347.5,221.0 348.5,218.8 349.5,216.6 350.5,214.5 351.5,212.4 352.5,210.3 353.5,208.3 354.5,206.3 355.5,204.4 356.5,202.5 357.5,200.7 358.5,198.9 359.5,197.1 360.5,195.4 361.5,193.7 362.5,192.1 363.5,190.5 364.5,189.0 365.5,187.5 366.5,186.1 367.5,184.7 368.5,183.4 369.5,182.1 370.5,180.8 371.5,179.7 372.5,178.5 373.5,177.5 374.5,176.4 375.5,175.5 376.5,174.6 377.5,173.7 378.5,172.9 379.5,172.2 380.5,171.5 381.5,170.8 382.5,170.2 383.5,169.7 384.5,169.2 385.5,168.8 386.5,168.5 387.5,168.2 388.5,167.9 389.5,167.7 390.5,167.6 391.5,167.5 392.5,167.5 393.5,167.5 394.5,167.6 395.5,167.8 396.5,168.0 397.5,168.3 398.5,168.6 399.5,169.0 400.5,169.4 401.5,169.9 402.5,170.5 403.5,171.1 404.5,171.7 405.5,172.4 406.5,173.2 407.5,174.0 408.5,174.9 409.5,175.9 410.5,176.9 411.5,177.9 412.5,179.0 413.5,180.1 414.5,181.3 415.5,182.6 416.5,183.9 417.5,185.2 418.5,186.6 419.5,188.1 420.5,189.6 421.5,191.1 422.5,192.7 423.5,194.4 424.5,196.1 425.5,197.8 426.5,199.6 427.5,201.4 428.5,203.3 429.5,205.2 430.5,207.1 431.5,209.1 432.5,211.1 433.5,213.2 434.5,215.3 435.5,217.5 436.5,219.6 437.5,221.9 438.5,224.1 439.5,226.4 440.5,228.7 441.5,231.1 442.5,233.5 443.5,235.9 444.5,238.3 445.5,240.8 446.5,243.3 447.5,245.8 448.5,248.3 449.5,250.9 450.5,253.5 451.5,256.1 452.5,258.8 453.5,261.4 454.5,264.1 455.5,266.8 456.5,269.5 457.5,272.2 458.5,274.9 459.5,277.7 460.5,280.5 461.5,283.2 462.5,286.0 463.5,288.8 464.5,291.6 465.5,294.4 466.5,297.2 467.5,300.0 468.5,302.8 469.5,305.7 470.5,308.5 471.5,311.3 472.5,314.1 473.5,316.9 474.5,319.7 475.5,322.5 476.5,325.3 477.5,328.1 478.5,330.9 479.5,333.7 480.5,336.4 481.5,339.2 482.5,341.9 483.5,344.6 484.5,347.3 485.5,350.0 486.5,352.7 487.5,355.3 488.5,357.9 489.5,360.5 490.5,363.1 491.5,365.7 492.5,368.2 493.5,370.7 494.5,373.2 495.5,375.7 496.5,378.1 497.5,380.5 498.5,382.9 499.5,385.2 500.5,387.5 501.5,389.8 502.5,392.0 503.5,394.2 504.5,396.4 505.5,398.5 506.5,400.6 507.5,402.7 508.5,404.7 509.5,406.7 510.5,408.6 511.5,410.5 512.5,412.3 513.5,414.1 514.5,415.9 515.5,417.6 516.5,419.3 517.5,420.9 518.5,422.5 519.5,424.0 520.5,425.5 521.5,426.9 522.5,428.3 523.5,429.6 524.5,430.9 525.5,432.2 526.5,433.3 527.5,434.5 528.5,435.5 529.5,436.6 530.5,437.5 531.5,438.4 532.5,439.3 533.5,440.1 534.5,440.8 535.5,441.5 536.5,442.2 537.5,442.8 538.5,443.3 539.5,443.8 540.5,444.2 541.5,444.5 542.5,444.8 543.5,445.1 544.5,445.3 545.5,445.4 546.5,445.5 547.5,445.5 548.5,445.5 549.5,445.4 550.5,445.2 551.5,445.0 552.5,444.7 553.5,444.4 554.5,444.0 555.5,443.6 556.5,443.1 557.5,442.5 558.5,441.9 559.5,441.3 560.5,440.6 561.5,439.8 562.5,439.0 563.5,438.1 564.5,437.1 565.5,436.1 566.5,435.1 567.5,434.0 568.5,432.9 569.5,431.7 570.5,430.4 571.5,429.1 572.5,427.8 573.5,426.4 574.5,424.9 575.5,423.4 576.5,421.9 577.5,420.3 578.5,418.6 579.5,416.9 580.5,415.2 581.5,413.4 582.5,411.6 583.5,409.7 584.5,407.8 585.5,405.9 586.5,403.9 587.5,401.9 588.5,399.8 589.5,397.7 590.5,395.5 591.5,393.4 592.5,391.1 593.5,388.9 594.5,386.6 595.5,384.3 596.5,381.9 597.5,379.5 598.5,377.1 599.5,374.7 600.5,372.2 601.5,369.7 602.5,367.2 603.5,364.7 604.5,362.1 605.5,359.5 606.5,356.9 607.5,354.2 608.5,351.6 609.5,348.9 610.5,346.2 611.5,343.5 612.5,340.8 613.5,338.1 614.5,335.3 615.5,332.5 616.5,329.8 617.5,327.0 618.5,324.2 619.5,321.4 620.5,318.6 621.5,315.8 622.5,313.0 623.5,310.2 624.5,307.3 625.5,304.5 626.5,301.7 627.5,298.9 628.5,296.1 629.5,293.3 630.5,290.5 631.5,287.7 632.5,284.9 633.5,282.1 634.5,279.3 635.5,276.6 636.5,273.8 637.5,271.1 638.5,268.4 639.5,265.7 640.5,263.0 641.5,260.3 642.5,257.7 643.5,255.1 644.5,252.5 645.5,249.9 646.5,247.3 647.5,244.8 648.5,242.3 649.5,239.8 650.5,237.3 651.5,234.9 652.5,232.5 653.5,230.1 654.5,227.8 655.5,225.5 656.5,223.2 657.5,221.0 658.5,218.8 659.5,216.6 660.5,214.5 661.5,212.4 662.5,210.3 663.5,208.3 664.5,206.3 665.5,204.4 666.5,202.5 667.5,200.7 668.5,198.9 669.5,197.1 670.5,195.4 671.5,193.7 672.5,192.1 673.5,190.5 674.5,189.0 675.5,187.5 676.5,186.1 677.5,184.7 678.5,183.4 679.5,182.1 680.5,180.8 681.5,179.7 682.5,178.5 683.5,177.5 684.5,176.4 685.5,175.5 686.5,174.6 687.5,173.7 688.5,172.9 689.5,172.2 690.5,171.5 691.5,170.8 692.5,170.2 693.5,169.7 694.5,169.2 695.5,168.8 696.5,168.5 697.5,168.2 698.5,167.9 699.5,167.7 700.5,167.6 701.5,167.5 702.5,167.5 703.5,167.5 704.5,167.6 705.5,167.8 706.5,168.0 707.5,168.3 708.5,168.6 709.5,169.0 710.5,169.4 711.5,169.9 712.5,170.5 713.5,171.1 714.5,171.7 715.5,172.4 716.5,173.2 717.5,174.0 718.5,174.9 719.5,175.9 720.5,176.9 721.5,177.9 722.5,179.0 723.5,180.1 724.5,181.3 725.5,182.6 726.5,183.9 727.5,185.2 728.5,186.6 729.5,188.1 730.5,189.6 731.5,191.1 732.5,192.7 733.5,194.4 734.5,196.1 735.5,197.8 736.5,199.6 737.5,201.4 738.5,203.3 739.5,205.2 740.5,207.1 741.5,209.1 742.5,211.1 743.5,213.2 744.5,215.3 745.5,217.5 746.5,219.6 747.5,221.9 748.5,224.1 749.5,226.4 750.5,228.7 751.5,231.1 752.5,233.5 753.5,235.9 754.5,238.3 755.5,240.8 756.5,243.3 757.5,245.8 758.5,248.3 759.5,250.9 760.5,253.5 761.5,256.1 762.5,258.8 763.5,261.4 764.5,264.1 765.5,266.8 766.5,269.5 767.5,272.2 768.5,274.9 769.5,277.7 770.5,280.5 771.5,283.2 772.5,286.0 773.5,288.8 774.5,291.6 775.5,294.4 776.5,297.2 777.5,300.0 778.5,302.8 779.5,305.7 780.5,308.5 781.5,311.3 782.5,314.1 783.5,316.9 784.5,319.7 785.5,322.5 786.5,325.3 787.5,328.1" fill="none" stroke="#0000FF" stroke-width="1.15" shape-rendering="crispEdges"/>
<polyline points="5.5,305.1 6.5,303.1 7.5,301.0 8.5,299.0 9.5,297.0 10.5,295.0 11.5,293.0 12.5,291.0 13.5,289.0 14.5,286.9 15.5,284.9 16.5,282.9 17.5,281.0 18.5,279.0 19.5,277.0 20.5,275.0 21.5,273.1 22.5,271.1 23.5,269.1 24.5,267.2 25.5,265.3 26.5,263.3 27.5,261.4 28.5,259.5 29.5,257.6 30.5,255.7 31.5,253.8 32.5,252.0 33.5,250.1 34.5,248.3 35.5,246.5 36.5,244.6 37.5,242.8 38.5,241.0 39.5,239.3 40.5,237.5 41.5,235.7 42.5,234.0 43.5,232.3 44.5,230.6 45.5,228.9 46.5,227.2 47.5,225.6 48.5,223.9 49.5,222.3 50.5,220.7 51.5,219.1 52.5,217.6 53.5,216.0 54.5,214.5 55.5,213.0 56.5,211.5 57.5,210.1 58.5,208.6 59.5,207.2 60.5,205.8 61.5,204.4 62.5,203.0 63.5,201.7 64.5,200.4 65.5,199.1 66.5,197.8 67.5,196.6 68.5,195.3 69.5,194.1 70.5,193.0 71.5,191.8 72.5,190.7 73.5,189.6 74.5,188.5 75.5,187.4 76.5,186.4 77.5,185.4 78.5,184.4 79.5,183.5 80.5,182.5 81.5,181.6 82.5,180.7 83.5,179.9 84.5,179.1 85.5,178.3 86.5,177.5 87.5,176.8 88.5,176.1 89.5,175.4 90.5,174.7 91.5,174.1 92.5,173.5 93.5,172.9 94.5,172.4 95.5,171.9 96.5,171.4 97.5,170.9 98.5,170.5 99.5,170.1 100.5,169.7 101.5,169.4 102.5,169.0 103.5,168.8 104.5,168.5 105.5,168.3 106.5,168.1 107.5,167.9 108.5,167.8 109.5,167.7 110.5,167.6 111.5,167.5 112.5,167.5 113.5,167.5 114.5,167.5 115.5,167.6 116.5,167.7 117.5,167.8 118.5,168.0 119.5,168.2 120.5,168.4 121.5,168.6 122.5,168.9 123.5,169.2 124.5,169.5 125.5,169.9 126.5,170.3 127.5,170.7 128.5,171.1 129.5,171.6 130.5,172.1 131.5,172.6 132.5,173.2 133.5,173.8 134.5,174.4 135.5,175.0 136.5,175.7 137.5,176.4 138.5,177.1 139.5,177.9 140.5,178.7 141.5,179.5 142.5,180.3 143.5,181.2 144.5,182.1 145.5,183.0 146.5,183.9 147.5,184.9 148.5,185.9 149.5,186.9 150.5,187.9 151.5,189.0 152.5,190.1 153.5,191.2 154.5,192.4 155.5,193.5 156.5,194.7 157.5,195.9 158.5,197.2 159.5,198.4 160.5,199.7 161.5,201.0 162.5,202.4 163.5,203.7 164.5,205.1 165.5,206.5 166.5,207.9 167.5,209.3 168.5,210.8 169.5,212.3 170.5,213.8 171.5,215.3 172.5,216.8 173.5,218.4 174.5,219.9 175.5,221.5 176.5,223.1 177.5,224.8 178.5,226.4 179.5,228.1 180.5,229.7 181.5,231.4 182.5,233.2 183.5,234.9 184.5,236.6 185.5,238.4 186.5,240.1 187.5,241.9 188.5,243.7 189.5,245.5 190.5,247.4 191.5,249.2 192.5,251.0 193.5,252.9 194.5,254.8 195.5,256.7 196.5,258.6 197.5,260.5 198.5,262.4 199.5,264.3 200.5,266.2 201.5,268.2 202.5,270.1 203.5,272.1 204.5,274.0 205.5,276.0 206.5,278.0 207.5,280.0 208.5,282.0 209.5,283.9 210.5,285.9 211.5,287.9 212.5,290.0 213.5,292.0 214.5,294.0 215.5,296.0 216.5,298.0 217.5,300.0 218.5,302.1 219.5,304.1 220.5,306.1 221.5,308.1 222.5,310.1 223.5,312.2 224.5,314.2 225.5,316.2 226.5,318.2 227.5,320.2 228.5,322.2 229.5,324.3 230.5,326.3 231.5,328.3 232.5,330.2 233.5,332.2 234.5,334.2 235.5,336.2 236.5,338.2 237.5,340.1 238.5,342.1 239.5,344.1 240.5,346.0 241.5,347.9 242.5,349.9 243.5,351.8 244.5,353.7 245.5,355.6 246.5,357.5 247.5,359.3 248.5,361.2 249.5,363.1 250.5,364.9 251.5,366.7 252.5,368.5 253.5,370.4 254.5,372.1 255.5,373.9 256.5,375.7 257.5,377.4 258.5,379.2 259.5,380.9 260.5,382.6 261.5,384.3 262.5,385.9 263.5,387.6 264.5,389.2 265.5,390.8 266.5,392.4 267.5,394.0 268.5,395.6 269.5,397.1 270.5,398.6 271.5,400.1 272.5,401.6 273.5,403.1 274.5,404.5 275.5,406.0 276.5,407.4 277.5,408.7 278.5,410.1 279.5,411.4 280.5,412.8 281.5,414.0 282.5,415.3 283.5,416.6 284.5,417.8 285.5,419.0 286.5,420.2 287.5,421.3 288.5,422.4 289.5,423.5 290.5,424.6 291.5,425.7 292.5,426.7 293.5,427.7 294.5,428.7 295.5,429.6 296.5,430.6 297.5,431.5 298.5,432.3 299.5,433.2 300.5,434.0 301.5,434.8 302.5,435.6 303.5,436.3 304.5,437.0 305.5,437.7 306.5,438.3 307.5,439.0 308.5,439.6 309.5,440.1 310.5,440.7 311.5,441.2 312.5,441.7 313.5,442.1 314.5,442.6 315.5,443.0 316.5,443.3 317.5,443.7 318.5,444.0 319.5,444.3 320.5,444.5 321.5,444.7 322.5,444.9 323.5,445.1 324.5,445.2 325.5,445.4 326.5,445.4 327.5,445.5 328.5,445.5 329.5,445.5 330.5,445.4 331.5,445.4 332.5,445.3 333.5,445.2 334.5,445.0 335.5,444.8 336.5,444.6 337.5,444.3 338.5,444.1 339.5,443.8 340.5,443.4 341.5,443.1 342.5,442.7 343.5,442.3 344.5,441.8 345.5,441.3 346.5,440.8 347.5,440.3 348.5,439.7 349.5,439.2 350.5,438.5 351.5,437.9 352.5,437.2 353.5,436.5 354.5,435.8 355.5,435.0 356.5,434.2 357.5,433.4 358.5,432.6 359.5,431.7 360.5,430.8 361.5,429.9 362.5,429.0 363.5,428.0 364.5,427.0 365.5,426.0 366.5,424.9 367.5,423.9 368.5,422.8 369.5,421.7 370.5,420.5 371.5,419.3 372.5,418.2 373.5,416.9 374.5,415.7 375.5,414.4 376.5,413.1 377.5,411.8 378.5,410.5 379.5,409.2 380.5,407.8 381.5,406.4 382.5,405.0 383.5,403.5 384.5,402.1 385.5,400.6 386.5,399.1 387.5,397.6 388.5,396.0 389.5,394.5 390.5,392.9 391.5,391.3 392.5,389.7 393.5,388.1 394.5,386.4 395.5,384.8 396.5,383.1 397.5,381.4 398.5,379.7 399.5,377.9 400.5,376.2 401.5,374.4 402.5,372.7 403.5,370.9 404.5,369.1 405.5,367.3 406.5,365.5 407.5,363.6 408.5,361.8 409.5,359.9 410.5,358.0 411.5,356.1 412.5,354.3 413.5,352.3 414.5,350.4 415.5,348.5 416.5,346.6 417.5,344.6 418.5,342.7 419.5,340.7 420.5,338.8 421.5,336.8 422.5,334.8 423.5,332.8 424.5,330.8 425.5,328.9 426.5,326.9 427.5,324.9 428.5,322.8 429.5,320.8 430.5,318.8 431.5,316.8 432.5,314.8 433.5,312.8 434.5,310.7 435.5,308.7 436.5,306.7 437.5,304.7 438.5,302.7 439.5,300.6 440.5,298.6 441.5,296.6 442.5,294.6 443.5,292.6 444.5,290.6 445.5,288.5 446.5,286.5 447.5,284.5 448.5,282.6 449.5,280.6 450.5,278.6 451.5,276.6 452.5,274.6 453.5,272.7 454.5,270.7 455.5,268.8 456.5,266.8 457.5,264.9 458.5,263.0 459.5,261.0 460.5,259.1 461.5,257.2 462.5,255.3 463.5,253.5 464.5,251.6 465.5,249.8 466.5,247.9 467.5,246.1 468.5,244.3 469.5,242.5 470.5,240.7 471.5,238.9 472.5,237.1 473.5,235.4 474.5,233.7 475.5,232.0 476.5,230.3 477.5,228.6 478.5,226.9 479.5,225.3 480.5,223.6 481.5,222.0 482.5,220.4 483.5,218.8 484.5,217.3 485.5,215.7 486.5,214.2 487.5,212.7 488.5,211.2 489.5,209.8 490.5,208.3 491.5,206.9 492.5,205.5 493.5,204.1 494.5,202.8 495.5,201.4 496.5,200.1 497.5,198.8 498.5,197.6 499.5,196.3 500.5,195.1 501.5,193.9 502.5,192.7 503.5,191.6 504.5,190.4 505.5,189.3 506.5,188.3 507.5,187.2 508.5,186.2 509.5,185.2 510.5,184.2 511.5,183.3 512.5,182.3 513.5,181.4 514.5,180.6 515.5,179.7 516.5,178.9 517.5,178.1 518.5,177.4 519.5,176.6 520.5,175.9 521.5,175.2 522.5,174.6 523.5,174.0 524.5,173.4 525.5,172.8 526.5,172.3 527.5,171.8 528.5,171.3 529.5,170.8 530.5,170.4 531.5,170.0 532.5,169.6 533.5,169.3 534.5,169.0 535.5,168.7 536.5,168.5 537.5,168.2 538.5,168.0 539.5,167.9 540.5,167.7 541.5,167.6 542.5,167.6 543.5,167.5 544.5,167.5 545.5,167.5 546.5,167.6 547.5,167.6 548.5,167.7 549.5,167.9 550.5,168.0 551.5,168.2 552.5,168.4 553.5,168.7 554.5,169.0 555.5,169.3 556.5,169.6 557.5,170.0 558.5,170.4 559.5,170.8 560.5,171.2 561.5,171.7 562.5,172.2 563.5,172.8 564.5,173.3 565.5,173.9 566.5,174.5 567.5,175.2 568.5,175.9 569.5,176.6 570.5,177.3 571.5,178.1 572.5,178.8 573.5,179.7 574.5,180.5 575.5,181.4 576.5,182.3 577.5,183.2 578.5,184.1 579.5,185.1 580.5,186.1 581.5,187.1 582.5,188.2 583.5,189.2 584.5,190.3 585.5,191.5 586.5,192.6 587.5,193.8 588.5,195.0 589.5,196.2 590.5,197.4 591.5,198.7 592.5,200.0 593.5,201.3 594.5,202.6 595.5,204.0 596.5,205.4 597.5,206.8 598.5,208.2 599.5,209.6 600.5,211.1 601.5,212.6 602.5,214.1 603.5,215.6 604.5,217.1 605.5,218.7 606.5,220.3 607.5,221.8 608.5,223.5 609.5,225.1 610.5,226.7 611.5,228.4 612.5,230.1 613.5,231.8 614.5,233.5 615.5,235.2 616.5,237.0 617.5,238.7 618.5,240.5 619.5,242.3 620.5,244.1 621.5,245.9 622.5,247.7 623.5,249.6 624.5,251.4 625.5,253.3 626.5,255.2 627.5,257.0 628.5,258.9 629.5,260.8 630.5,262.8 631.5,264.7 632.5,266.6 633.5,268.6 634.5,270.5 635.5,272.5 636.5,274.4 637.5,276.4 638.5,278.4 639.5,280.4 640.5,282.4 641.5,284.3 642.5,286.3 643.5,288.3 644.5,290.4 645.5,292.4 646.5,294.4 647.5,296.4 648.5,298.4 649.5,300.4 650.5,302.5 651.5,304.5 652.5,306.5 653.5,308.5 654.5,310.5 655.5,312.6 656.5,314.6 657.5,316.6 658.5,318.6 659.5,320.6 660.5,322.6 661.5,324.7 662.5,326.7 663.5,328.7 664.5,330.6 665.5,332.6 666.5,334.6 667.5,336.6 668.5,338.6 669.5,340.5 670.5,342.5 671.5,344.4 672.5,346.4 673.5,348.3 674.5,350.2 675.5,352.2 676.5,354.1 677.5,356.0 678.5,357.8 679.5,359.7 680.5,361.6 681.5,363.4 682.5,365.3 683.5,367.1 684.5,368.9 685.5,370.7 686.5,372.5 687.5,374.3 688.5,376.0 689.5,377.8 690.5,379.5 691.5,381.2 692.5,382.9 693.5,384.6 694.5,386.3 695.5,387.9 696.5,389.5 697.5,391.2 698.5,392.7 699.5,394.3 700.5,395.9 701.5,397.4 702.5,398.9 703.5,400.4 704.5,401.9 705.5,403.4 706.5,404.8 707.5,406.2 708.5,407.6 709.5,409.0 710.5,410.4 711.5,411.7 712.5,413.0 713.5,414.3 714.5,415.6 715.5,416.8 716.5,418.0 717.5,419.2 718.5,420.4 719.5,421.5 720.5,422.7 721.5,423.8 722.5,424.8 723.5,425.9 724.5,426.9 725.5,427.9 726.5,428.9 727.5,429.8 728.5,430.7 729.5,431.6 730.5,432.5 731.5,433.3 732.5,434.2 733.5,434.9 734.5,435.7 735.5,436.4 736.5,437.1 737.5,437.8 738.5,438.5 739.5,439.1 740.5,439.7 741.5,440.2 742.5,440.8 743.5,441.3 744.5,441.8 745.5,442.2 746.5,442.6 747.5,443.0 748.5,443.4 749.5,443.7 750.5,444.0 751.5,444.3 752.5,444.6 753.5,444.8 754.5,445.0 755.5,445.1 756.5,445.3 757.5,445.4 758.5,445.4 759.5,445.5 760.5,445.5 761.5,445.5 762.5,445.4 763.5,445.4 764.5,445.3 765.5,445.1 766.5,445.0 767.5,444.8 768.5,444.5 769.5,444.3 770.5,444.0 771.5,443.7 772.5,443.4 773.5,443.0 774.5,442.6 775.5,442.2 776.5,441.7 777.5,441.2 778.5,440.7 779.5,440.2 780.5,439.6 781.5,439.0 782.5,438.4 783.5,437.8 784.5,437.1 785.5,436.4 786.5,435.6 787.5,434.9" fill="none" stroke="#FFFF00" stroke-width="1.15" shape-rendering="crispEdges"/>
<polyline points="5.5,305.5 6.5,304.1 7.5,302.7 8.5,301.3 9.5,299.9 10.5,298.5 11.5,297.1 12.5,295.7 13.5,294.3 14.5,292.9 15.5,291.5 16.5,290.1 17.5,288.7 18.5,287.3 19.5,285.9 20.5,284.5 21.5,283.1 22.5,281.7 23.5,280.4 24.5,279.0 25.5,277.6 26.5,276.2 27.5,274.9 28.5,273.5 29.5,272.1 30.5,270.8 31.5,269.4 32.5,268.1 33.5,266.7 34.5,265.4 35.5,264.0 36.5,262.7 37.5,261.4 38.5,260.0 39.5,258.7 40.5,257.4 41.5,256.1 42.5,254.8 43.5,253.5 44.5,252.2 45.5,250.9 46.5,249.6 47.5,248.3 48.5,247.0 49.5,245.8 50.5,244.5 51.5,243.3 52.5,242.0 53.5,240.8 54.5,239.5 55.5,238.3 56.5,237.1 57.5,235.9 58.5,234.7 59.5,233.5 60.5,232.3 61.5,231.1 62.5,229.9 63.5,228.7 64.5,227.6 65.5,226.4 66.5,225.3 67.5,224.1 68.5,223.0 69.5,221.9 70.5,220.8 71.5,219.7 72.5,218.6 73.5,217.5 74.5,216.4 75.5,215.4 76.5,214.3 77.5,213.3 78.5,212.2 79.5,211.2 80.5,210.2 81.5,209.2 82.5,208.2 83.5,207.2 84.5,206.2 85.5,205.2 86.5,204.3 87.5,203.3 88.5,202.4 89.5,201.5 90.5,200.5 91.5,199.6 92.5,198.7 93.5,197.9 94.5,197.0 95.5,196.1 96.5,195.3 97.5,194.4 98.5,193.6 99.5,192.8 100.5,192.0 101.5,191.2 102.5,190.4 103.5,189.7 104.5,188.9 105.5,188.2 106.5,187.4 107.5,186.7 108.5,186.0 109.5,185.3 110.5,184.6 111.5,184.0 112.5,183.3 113.5,182.7 114.5,182.0 115.5,181.4 116.5,180.8 117.5,180.2 118.5,179.6 119.5,179.1 120.5,178.5 121.5,178.0 122.5,177.4 123.5,176.9 124.5,176.4 125.5,175.9 126.5,175.5 127.5,175.0 128.5,174.5 129.5,174.1 130.5,173.7 131.5,173.3 132.5,172.9 133.5,172.5 134.5,172.1 135.5,171.8 136.5,171.4 137.5,171.1 138.5,170.8 139.5,170.5 140.5,170.2 141.5,170.0 142.5,169.7 143.5,169.5 144.5,169.2 145.5,169.0 146.5,168.8 147.5,168.6 148.5,168.5 149.5,168.3 150.5,168.2 151.5,168.0 152.5,167.9 153.5,167.8 154.5,167.7 155.5,167.7 156.5,167.6 157.5,167.5 158.5,167.5 159.5,167.5 160.5,167.5 161.5,167.5 162.5,167.5 163.5,167.6 164.5,167.6 165.5,167.7 166.5,167.8 167.5,167.9 168.5,168.0 169.5,168.1 170.5,168.3 171.5,168.4 172.5,168.6 173.5,168.8 174.5,169.0 175.5,169.2 176.5,169.4 177.5,169.6 178.5,169.9 179.5,170.2 180.5,170.4 181.5,170.7 182.5,171.1 183.5,171.4 184.5,171.7 185.5,172.1 186.5,172.4 187.5,172.8 188.5,173.2 189.5,173.6 190.5,174.0 191.5,174.5 192.5,174.9 193.5,175.4 194.5,175.8 195.5,176.3 196.5,176.8 197.5,177.3 198.5,177.9 199.5,178.4 200.5,178.9 201.5,179.5 202.5,180.1 203.5,180.7 204.5,181.3 205.5,181.9 206.5,182.5 207.5,183.2 208.5,183.8 209.5,184.5 210.5,185.2 211.5,185.9 212.5,186.6 213.5,187.3 214.5,188.0 215.5,188.8 216.5,189.5 217.5,190.3 218.5,191.1 219.5,191.8 220.5,192.6 221.5,193.5 222.5,194.3 223.5,195.1 224.5,196.0 225.5,196.8 226.5,197.7 227.5,198.6 228.5,199.5 229.5,200.4 230.5,201.3 231.5,202.2 232.5,203.1 233.5,204.1 234.5,205.0 235.5,206.0 236.5,207.0 237.5,208.0 238.5,209.0 239.5,210.0 240.5,211.0 241.5,212.0 242.5,213.0 243.5,214.1 244.5,215.1 245.5,216.2 246.5,217.3 247.5,218.4 248.5,219.5 249.5,220.6 250.5,221.7 251.5,222.8 252.5,223.9 253.5,225.0 254.5,226.2 255.5,227.3 256.5,228.5 257.5,229.7 258.5,230.8 259.5,232.0 260.5,233.2 261.5,234.4 262.5,235.6 263.5,236.8 264.5,238.1 265.5,239.3 266.5,240.5 267.5,241.8 268.5,243.0 269.5,244.3 270.5,245.5 271.5,246.8 272.5,248.1 273.5,249.3 274.5,250.6 275.5,251.9 276.5,253.2 277.5,254.5 278.5,255.8 279.5,257.1 280.5,258.4 281.5,259.8 282.5,261.1 283.5,262.4 284.5,263.8 285.5,265.1 286.5,266.4 287.5,267.8 288.5,269.1 289.5,270.5 290.5,271.9 291.5,273.2 292.5,274.6 293.5,276.0 294.5,277.3 295.5,278.7 296.5,280.1 297.5,281.5 298.5,282.9 299.5,284.2 300.5,285.6 301.5,287.0 302.5,288.4 303.5,289.8 304.5,291.2 305.5,292.6 306.5,294.0 307.5,295.4 308.5,296.8 309.5,298.2 310.5,299.6 311.5,301.0 312.5,302.4 313.5,303.8 314.5,305.2 315.5,306.6 316.5,308.0 317.5,309.5 318.5,310.9 319.5,312.3 320.5,313.7 321.5,315.1 322.5,316.5 323.5,317.9 324.5,319.3 325.5,320.7 326.5,322.1 327.5,323.5 328.5,324.9 329.5,326.3 330.5,327.6 331.5,329.0 332.5,330.4 333.5,331.8 334.5,333.2 335.5,334.6 336.5,335.9 337.5,337.3 338.5,338.7 339.5,340.0 340.5,341.4 341.5,342.8 342.5,344.1 343.5,345.5 344.5,346.8 345.5,348.2 346.5,349.5 347.5,350.8 348.5,352.2 349.5,353.5 350.5,354.8 351.5,356.1 352.5,357.4 353.5,358.7 354.5,360.0 355.5,361.3 356.5,362.6 357.5,363.9 358.5,365.2 359.5,366.5 360.5,367.7 361.5,369.0 362.5,370.2 363.5,371.5 364.5,372.7 365.5,374.0 366.5,375.2 367.5,376.4 368.5,377.6 369.5,378.8 370.5,380.0 371.5,381.2 372.5,382.4 373.5,383.6 374.5,384.7 375.5,385.9 376.5,387.0 377.5,388.2 378.5,389.3 379.5,390.4 380.5,391.6 381.5,392.7 382.5,393.8 383.5,394.9 384.5,395.9 385.5,397.0 386.5,398.1 387.5,399.1 388.5,400.2 389.5,401.2 390.5,402.2 391.5,403.2 392.5,404.2 393.5,405.2 394.5,406.2 395.5,407.2 396.5,408.2 397.5,409.1 398.5,410.1 399.5,411.0 400.5,411.9 401.5,412.8 402.5,413.7 403.5,414.6 404.5,415.5 405.5,416.4 406.5,417.2 407.5,418.1 408.5,418.9 409.5,419.7 410.5,420.5 411.5,421.3 412.5,422.1 413.5,422.9 414.5,423.6 415.5,424.4 416.5,425.1 417.5,425.9 418.5,426.6 419.5,427.3 420.5,428.0 421.5,428.6 422.5,429.3 423.5,430.0 424.5,430.6 425.5,431.2 426.5,431.8 427.5,432.4 428.5,433.0 429.5,433.6 430.5,434.2 431.5,434.7 432.5,435.3 433.5,435.8 434.5,436.3 435.5,436.8 436.5,437.3 437.5,437.7 438.5,438.2 439.5,438.6 440.5,439.1 441.5,439.5 442.5,439.9 443.5,440.3 444.5,440.6 445.5,441.0 446.5,441.4 447.5,441.7 448.5,442.0 449.5,442.3 450.5,442.6 451.5,442.9 452.5,443.2 453.5,443.4 454.5,443.6 455.5,443.9 456.5,444.1 457.5,444.3 458.5,444.4 459.5,444.6 460.5,444.8 461.5,444.9 462.5,445.0 463.5,445.1 464.5,445.2 465.5,445.3 466.5,445.4 467.5,445.4 468.5,445.5 469.5,445.5 470.5,445.5 471.5,445.5 472.5,445.5 473.5,445.4 474.5,445.4 475.5,445.3 476.5,445.3 477.5,445.2 478.5,445.1 479.5,444.9 480.5,444.8 481.5,444.7 482.5,444.5 483.5,444.3 484.5,444.1 485.5,443.9 486.5,443.7 487.5,443.5 488.5,443.3 489.5,443.0 490.5,442.7 491.5,442.4 492.5,442.1 493.5,441.8 494.5,441.5 495.5,441.1 496.5,440.8 497.5,440.4 498.5,440.0 499.5,439.6 500.5,439.2 501.5,438.8 502.5,438.4 503.5,437.9 504.5,437.5 505.5,437.0 506.5,436.5 507.5,436.0 508.5,435.5 509.5,434.9 510.5,434.4 511.5,433.8 512.5,433.3 513.5,432.7 514.5,432.1 515.5,431.5 516.5,430.9 517.5,430.2 518.5,429.6 519.5,428.9 520.5,428.2 521.5,427.6 522.5,426.9 523.5,426.1 524.5,425.4 525.5,424.7 526.5,423.9 527.5,423.2 528.5,422.4 529.5,421.6 530.5,420.8 531.5,420.0 532.5,419.2 533.5,418.4 534.5,417.5 535.5,416.7 536.5,415.8 537.5,415.0 538.5,414.1 539.5,413.2 540.5,412.3 541.5,411.4 542.5,410.4 543.5,409.5 544.5,408.5 545.5,407.6 546.5,406.6 547.5,405.6 548.5,404.6 549.5,403.6 550.5,402.6 551.5,401.6 552.5,400.6 553.5,399.5 554.5,398.5 555.5,397.4 556.5,396.4 557.5,395.3 558.5,394.2 559.5,393.1 560.5,392.0 561.5,390.9 562.5,389.8 563.5,388.6 564.5,387.5 565.5,386.3 566.5,385.2 567.5,384.0 568.5,382.9 569.5,381.7 570.5,380.5 571.5,379.3 572.5,378.1 573.5,376.9 574.5,375.7 575.5,374.5 576.5,373.2 577.5,372.0 578.5,370.7 579.5,369.5 580.5,368.2 581.5,367.0 582.5,365.7 583.5,364.4 584.5,363.1 585.5,361.9 586.5,360.6 587.5,359.3 588.5,358.0 589.5,356.7 590.5,355.3 591.5,354.0 592.5,352.7 593.5,351.4 594.5,350.0 595.5,348.7 596.5,347.4 597.5,346.0 598.5,344.7 599.5,343.3 600.5,342.0 601.5,340.6 602.5,339.2 603.5,337.9 604.5,336.5 605.5,335.1 606.5,333.7 607.5,332.4 608.5,331.0 609.5,329.6 610.5,328.2 611.5,326.8 612.5,325.4 613.5,324.0 614.5,322.6 615.5,321.2 616.5,319.8 617.5,318.4 618.5,317.0 619.5,315.6 620.5,314.2 621.5,312.8 622.5,311.4 623.5,310.0 624.5,308.6 625.5,307.2 626.5,305.8 627.5,304.4 628.5,303.0 629.5,301.6 630.5,300.2 631.5,298.8 632.5,297.4 633.5,296.0 634.5,294.6 635.5,293.2 636.5,291.8 637.5,290.4 638.5,289.0 639.5,287.6 640.5,286.2 641.5,284.8 642.5,283.4 643.5,282.0 644.5,280.6 645.5,279.3 646.5,277.9 647.5,276.5 648.5,275.1 649.5,273.8 650.5,272.4 651.5,271.0 652.5,269.7 653.5,268.3 654.5,267.0 655.5,265.6 656.5,264.3 657.5,263.0 658.5,261.6 659.5,260.3 660.5,259.0 661.5,257.7 662.5,256.3 663.5,255.0 664.5,253.7 665.5,252.4 666.5,251.1 667.5,249.9 668.5,248.6 669.5,247.3 670.5,246.0 671.5,244.8 672.5,243.5 673.5,242.3 674.5,241.0 675.5,239.8 676.5,238.5 677.5,237.3 678.5,236.1 679.5,234.9 680.5,233.7 681.5,232.5 682.5,231.3 683.5,230.1 684.5,229.0 685.5,227.8 686.5,226.7 687.5,225.5 688.5,224.4 689.5,223.2 690.5,222.1 691.5,221.0 692.5,219.9 693.5,218.8 694.5,217.7 695.5,216.6 696.5,215.6 697.5,214.5 698.5,213.5 699.5,212.4 700.5,211.4 701.5,210.4 702.5,209.4 703.5,208.4 704.5,207.4 705.5,206.4 706.5,205.4 707.5,204.5 708.5,203.5 709.5,202.6 710.5,201.6 711.5,200.7 712.5,199.8 713.5,198.9 714.5,198.0 715.5,197.2 716.5,196.3 717.5,195.5 718.5,194.6 719.5,193.8 720.5,193.0 721.5,192.2 722.5,191.4 723.5,190.6 724.5,189.8 725.5,189.1 726.5,188.3 727.5,187.6 728.5,186.9 729.5,186.1 730.5,185.4 731.5,184.8 732.5,184.1 733.5,183.4 734.5,182.8 735.5,182.1 736.5,181.5 737.5,180.9 738.5,180.3 739.5,179.7 740.5,179.2 741.5,178.6 742.5,178.1 743.5,177.5 744.5,177.0 745.5,176.5 746.5,176.0 747.5,175.5 748.5,175.1 749.5,174.6 750.5,174.2 751.5,173.8 752.5,173.4 753.5,173.0 754.5,172.6 755.5,172.2 756.5,171.9 757.5,171.5 758.5,171.2 759.5,170.9 760.5,170.6 761.5,170.3 762.5,170.0 763.5,169.7 764.5,169.5 765.5,169.3 766.5,169.1 767.5,168.9 768.5,168.7 769.5,168.5 770.5,168.3 771.5,168.2 772.5,168.1 773.5,167.9 774.5,167.8 775.5,167.7 776.5,167.7 777.5,167.6 778.5,167.6 779.5,167.5 780.5,167.5 781.5,167.5 782.5,167.5 783.5,167.5 784.5,167.6 785.5,167.6 786.5,167.7 787.5,167.8" fill="none" stroke="#FF0000" stroke-width="1.15" shape-rendering="crispEdges"/>
<rect x="770" y="415" width="1" height="40" fill="#FF6880"/>
<rect x="401" y="415" width="1" height="40" fill="#FF0000"/>
<rect x="280" y="415" width="1" height="40" fill="#FFFF00"/>
<rect x="202" y="415" width="1" height="40" fill="#0000FF"/>
<rect x="159" y="415" width="1" height="40" fill="#FF8020"/>
<rect x="136" y="415" width="1" height="40" fill="#0068B8"/>
<rect x="116" y="415" width="1" height="40" fill="#80FF80"/>
<rect x="103" y="415" width="1" height="40" fill="#FF00FF"/>
<rect x="4" y="141" width="785" height="1" fill="#000"/>
<rect x="4" y="141" width="1" height="330" fill="#000"/>
<rect x="788" y="141" width="1" height="330" fill="#000"/>
<rect x="4" y="470" width="785" height="1" fill="#000"/></svg>
<div class="t" style="left:16.2px;top:48.84px;color:#000;font-size:12px;font-weight:400;transform:scaleX(0.8873);">Longueur physique d'une branche :</div>
<div class="t" style="left:16.2px;top:70.84px;color:#000;font-size:12px;font-weight:400;transform:scaleX(0.8845);">Longueur physique de l'échelle :</div>
<div style="position:absolute;left:200px;top:50px;width:37px;height:20px;background:#fff;box-shadow:inset 1px 1px 0 #808080, inset -1px -1px 0 #fff, inset 2px 2px 0 #404040, inset -2px -2px 0 #D4D0C8;"></div>
<div class="t" style="left:203.1px;top:51.84px;color:#000;font-size:12px;font-weight:400;transform:scaleX(0.9291);">2062</div>
<div style="position:absolute;left:200px;top:70px;width:37px;height:21px;background:#fff;box-shadow:inset 1px 1px 0 #808080, inset -1px -1px 0 #fff, inset 2px 2px 0 #404040, inset -2px -2px 0 #D4D0C8;"></div>
<div class="t" style="left:203.1px;top:71.84px;color:#000;font-size:12px;font-weight:400;transform:scaleX(0.9291);">3000</div>
<div class="t" style="left:276.0px;top:48.84px;color:#000;font-size:12px;font-weight:400;transform:scaleX(0.9017);">Coef de vélocité :</div>
<div class="t" style="left:276.0px;top:71.84px;color:#000;font-size:12px;font-weight:400;transform:scaleX(0.9017);">Coef de vélocité :</div>
<div style="position:absolute;left:368px;top:50px;width:29px;height:20px;background:#fff;box-shadow:inset 1px 1px 0 #808080, inset -1px -1px 0 #fff, inset 2px 2px 0 #404040, inset -2px -2px 0 #D4D0C8;"></div>
<div class="t" style="left:371.1px;top:51.84px;color:#000;font-size:12px;font-weight:400;transform:scaleX(0.9334);">0.97</div>
<div style="position:absolute;left:368px;top:70px;width:45px;height:21px;background:#fff;box-shadow:inset 1px 1px 0 #808080, inset -1px -1px 0 #fff, inset 2px 2px 0 #404040, inset -2px -2px 0 #D4D0C8;"></div>
<div class="t" style="left:371.1px;top:71.84px;color:#000;font-size:12px;font-weight:400;transform:scaleX(0.9334);">0.92</div>
<div style="position:absolute;left:395px;top:72px;width:16px;height:17px;background:#D4D0C8;box-shadow:inset 1px 1px 0 #fff, inset -1px -1px 0 #404040, inset -2px -2px 0 #808080;"></div>
<svg style="position:absolute;left:395px;top:72px" width="16" height="17" viewBox="0 0 16 17" shape-rendering="crispEdges"><path d="M4 6h7v1h-1v1h-1v1h-1v1h-1v-1h-1v-1h-1v-1h-1z" fill="#000"/></svg>
<div style="position:absolute;left:16px;top:103px;width:244px;height:35px;box-sizing:border-box;border:1px solid #808080;"></div>
<div style="position:absolute;left:17px;top:104px;width:244px;height:35px;box-sizing:border-box;border:1px solid #fff;"></div>
<div style="position:absolute;left:24px;top:101px;width:67px;height:5px;background:#008080;"></div>
<div class="t" style="left:26.0px;top:96.84px;color:#FFFF00;font-size:12px;font-weight:400;transform:scaleX(0.92);">Accord Série</div>
<div style="position:absolute;left:20px;top:113px;width:105px;height:17px;background:#C0C0C0;"></div>
<div class="t" style="left:22.1px;top:112.84px;color:#000;font-size:12px;font-weight:400;transform:scaleX(0.8931);">Impédance basse</div>
<svg style="position:absolute;left:113px;top:115px" width="12" height="12" viewBox="0 0 12 12" shape-rendering="crispEdges"><rect x="4" y="0" width="4" height="1" fill="#808080"/><rect x="2" y="1" width="2" height="1" fill="#808080"/><rect x="4" y="1" width="4" height="1" fill="#404040"/><rect x="8" y="1" width="2" height="1" fill="#808080"/><rect x="1" y="2" width="1" height="1" fill="#808080"/><rect x="2" y="2" width="2" height="1" fill="#404040"/><rect x="4" y="2" width="4" height="1" fill="#FFFFFF"/><rect x="8" y="2" width="2" height="1" fill="#404040"/><rect x="10" y="2" width="1" height="1" fill="#FFFFFF"/><rect x="1" y="3" width="1" height="1" fill="#808080"/><rect x="2" y="3" width="1" height="1" fill="#404040"/><rect x="3" y="3" width="6" height="1" fill="#FFFFFF"/><rect x="9" y="3" width="1" height="1" fill="#D4D0C8"/><rect x="10" y="3" width="1" height="1" fill="#FFFFFF"/><rect x="0" y="4" width="1" height="1" fill="#808080"/><rect x="1" y="4" width="1" height="1" fill="#404040"/><rect x="2" y="4" width="3" height="1" fill="#FFFFFF"/><rect x="5" y="4" width="2" height="1" fill="#000000"/><rect x="7" y="4" width="3" height="1" fill="#FFFFFF"/><rect x="10" y="4" width="1" height="1" fill="#D4D0C8"/><rect x="11" y="4" width="1" height="1" fill="#FFFFFF"/><rect x="0" y="5" width="1" height="1" fill="#808080"/><rect x="1" y="5" width="1" height="1" fill="#404040"/><rect x="2" y="5" width="2" height="1" fill="#FFFFFF"/><rect x="4" y="5" width="4" height="1" fill="#000000"/><rect x="8" y="5" width="2" height="1" fill="#FFFFFF"/><rect x="10" y="5" width="1" height="1" fill="#D4D0C8"/><rect x="11" y="5" width="1" height="1" fill="#FFFFFF"/><rect x="0" y="6" width="1" height="1" fill="#808080"/><rect x="1" y="6" width="1" height="1" fill="#404040"/><rect x="2" y="6" width="2" height="1" fill="#FFFFFF"/><rect x="4" y="6" width="4" height="1" fill="#000000"/><rect x="8" y="6" width="2" height="1" fill="#FFFFFF"/><rect x="10" y="6" width="1" height="1" fill="#D4D0C8"/><rect x="11" y="6" width="1" height="1" fill="#FFFFFF"/><rect x="0" y="7" width="1" height="1" fill="#808080"/><rect x="1" y="7" width="1" height="1" fill="#404040"/><rect x="2" y="7" width="3" height="1" fill="#FFFFFF"/><rect x="5" y="7" width="2" height="1" fill="#000000"/><rect x="7" y="7" width="3" height="1" fill="#FFFFFF"/><rect x="10" y="7" width="1" height="1" fill="#D4D0C8"/><rect x="11" y="7" width="1" height="1" fill="#FFFFFF"/><rect x="1" y="8" width="1" height="1" fill="#808080"/><rect x="2" y="8" width="1" height="1" fill="#404040"/><rect x="3" y="8" width="6" height="1" fill="#FFFFFF"/><rect x="9" y="8" width="1" height="1" fill="#D4D0C8"/><rect x="10" y="8" width="1" height="1" fill="#FFFFFF"/><rect x="1" y="9" width="1" height="1" fill="#808080"/><rect x="2" y="9" width="2" height="1" fill="#D4D0C8"/><rect x="4" y="9" width="4" height="1" fill="#FFFFFF"/><rect x="8" y="9" width="2" height="1" fill="#D4D0C8"/><rect x="10" y="9" width="1" height="1" fill="#FFFFFF"/><rect x="2" y="10" width="2" height="1" fill="#FFFFFF"/><rect x="4" y="10" width="4" height="1" fill="#D4D0C8"/><rect x="8" y="10" width="2" height="1" fill="#FFFFFF"/><rect x="4" y="11" width="4" height="1" fill="#FFFFFF"/></svg>
<div style="position:absolute;left:136px;top:113px;width:121px;height:17px;background:#808080;"></div>
<svg style="position:absolute;left:138px;top:115px" width="12" height="12" viewBox="0 0 12 12" shape-rendering="crispEdges"><rect x="4" y="0" width="4" height="1" fill="#808080"/><rect x="2" y="1" width="2" height="1" fill="#808080"/><rect x="4" y="1" width="4" height="1" fill="#404040"/><rect x="8" y="1" width="2" height="1" fill="#808080"/><rect x="1" y="2" width="1" height="1" fill="#808080"/><rect x="2" y="2" width="2" height="1" fill="#404040"/><rect x="4" y="2" width="4" height="1" fill="#FFFFFF"/><rect x="8" y="2" width="2" height="1" fill="#404040"/><rect x="10" y="2" width="1" height="1" fill="#FFFFFF"/><rect x="1" y="3" width="1" height="1" fill="#808080"/><rect x="2" y="3" width="1" height="1" fill="#404040"/><rect x="3" y="3" width="6" height="1" fill="#FFFFFF"/><rect x="9" y="3" width="1" height="1" fill="#D4D0C8"/><rect x="10" y="3" width="1" height="1" fill="#FFFFFF"/><rect x="0" y="4" width="1" height="1" fill="#808080"/><rect x="1" y="4" width="1" height="1" fill="#404040"/><rect x="2" y="4" width="8" height="1" fill="#FFFFFF"/><rect x="10" y="4" width="1" height="1" fill="#D4D0C8"/><rect x="11" y="4" width="1" height="1" fill="#FFFFFF"/><rect x="0" y="5" width="1" height="1" fill="#808080"/><rect x="1" y="5" width="1" height="1" fill="#404040"/><rect x="2" y="5" width="8" height="1" fill="#FFFFFF"/><rect x="10" y="5" width="1" height="1" fill="#D4D0C8"/><rect x="11" y="5" width="1" height="1" fill="#FFFFFF"/><rect x="0" y="6" width="1" height="1" fill="#808080"/><rect x="1" y="6" width="1" height="1" fill="#404040"/><rect x="2" y="6" width="8" height="1" fill="#FFFFFF"/><rect x="10" y="6" width="1" height="1" fill="#D4D0C8"/><rect x="11" y="6" width="1" height="1" fill="#FFFFFF"/><rect x="0" y="7" width="1" height="1" fill="#808080"/><rect x="1" y="7" width="1" height="1" fill="#404040"/><rect x="2" y="7" width="8" height="1" fill="#FFFFFF"/><rect x="10" y="7" width="1" height="1" fill="#D4D0C8"/><rect x="11" y="7" width="1" height="1" fill="#FFFFFF"/><rect x="1" y="8" width="1" height="1" fill="#808080"/><rect x="2" y="8" width="1" height="1" fill="#404040"/><rect x="3" y="8" width="6" height="1" fill="#FFFFFF"/><rect x="9" y="8" width="1" height="1" fill="#D4D0C8"/><rect x="10" y="8" width="1" height="1" fill="#FFFFFF"/><rect x="1" y="9" width="1" height="1" fill="#808080"/><rect x="2" y="9" width="2" height="1" fill="#D4D0C8"/><rect x="4" y="9" width="4" height="1" fill="#FFFFFF"/><rect x="8" y="9" width="2" height="1" fill="#D4D0C8"/><rect x="10" y="9" width="1" height="1" fill="#FFFFFF"/><rect x="2" y="10" width="2" height="1" fill="#FFFFFF"/><rect x="4" y="10" width="4" height="1" fill="#D4D0C8"/><rect x="8" y="10" width="2" height="1" fill="#FFFFFF"/><rect x="4" y="11" width="4" height="1" fill="#FFFFFF"/></svg>
<div class="t" style="left:154.2px;top:112.84px;color:#000;font-size:12px;font-weight:400;transform:scaleX(0.8887);">Impédance moyenne</div>
<div style="position:absolute;left:284px;top:103px;width:128px;height:35px;box-sizing:border-box;border:1px solid #808080;"></div>
<div style="position:absolute;left:285px;top:104px;width:128px;height:35px;box-sizing:border-box;border:1px solid #fff;"></div>
<div style="position:absolute;left:292px;top:101px;width:83px;height:5px;background:#008080;"></div>
<div class="t" style="left:294.2px;top:96.84px;color:#C0C0C0;font-size:12px;font-weight:400;transform:scaleX(0.8996);">Accord Parallèle</div>
<div style="position:absolute;left:296px;top:114px;width:110px;height:17px;background:#0000FF;"></div>
<svg style="position:absolute;left:297px;top:116px" width="12" height="12" viewBox="0 0 12 12" shape-rendering="crispEdges"><rect x="4" y="0" width="4" height="1" fill="#808080"/><rect x="2" y="1" width="2" height="1" fill="#808080"/><rect x="4" y="1" width="4" height="1" fill="#404040"/><rect x="8" y="1" width="2" height="1" fill="#808080"/><rect x="1" y="2" width="1" height="1" fill="#808080"/><rect x="2" y="2" width="2" height="1" fill="#404040"/><rect x="4" y="2" width="4" height="1" fill="#FFFFFF"/><rect x="8" y="2" width="2" height="1" fill="#404040"/><rect x="10" y="2" width="1" height="1" fill="#FFFFFF"/><rect x="1" y="3" width="1" height="1" fill="#808080"/><rect x="2" y="3" width="1" height="1" fill="#404040"/><rect x="3" y="3" width="6" height="1" fill="#FFFFFF"/><rect x="9" y="3" width="1" height="1" fill="#D4D0C8"/><rect x="10" y="3" width="1" height="1" fill="#FFFFFF"/><rect x="0" y="4" width="1" height="1" fill="#808080"/><rect x="1" y="4" width="1" height="1" fill="#404040"/><rect x="2" y="4" width="8" height="1" fill="#FFFFFF"/><rect x="10" y="4" width="1" height="1" fill="#D4D0C8"/><rect x="11" y="4" width="1" height="1" fill="#FFFFFF"/><rect x="0" y="5" width="1" height="1" fill="#808080"/><rect x="1" y="5" width="1" height="1" fill="#404040"/><rect x="2" y="5" width="8" height="1" fill="#FFFFFF"/><rect x="10" y="5" width="1" height="1" fill="#D4D0C8"/><rect x="11" y="5" width="1" height="1" fill="#FFFFFF"/><rect x="0" y="6" width="1" height="1" fill="#808080"/><rect x="1" y="6" width="1" height="1" fill="#404040"/><rect x="2" y="6" width="8" height="1" fill="#FFFFFF"/><rect x="10" y="6" width="1" height="1" fill="#D4D0C8"/><rect x="11" y="6" width="1" height="1" fill="#FFFFFF"/><rect x="0" y="7" width="1" height="1" fill="#808080"/><rect x="1" y="7" width="1" height="1" fill="#404040"/><rect x="2" y="7" width="8" height="1" fill="#FFFFFF"/><rect x="10" y="7" width="1" height="1" fill="#D4D0C8"/><rect x="11" y="7" width="1" height="1" fill="#FFFFFF"/><rect x="1" y="8" width="1" height="1" fill="#808080"/><rect x="2" y="8" width="1" height="1" fill="#404040"/><rect x="3" y="8" width="6" height="1" fill="#FFFFFF"/><rect x="9" y="8" width="1" height="1" fill="#D4D0C8"/><rect x="10" y="8" width="1" height="1" fill="#FFFFFF"/><rect x="1" y="9" width="1" height="1" fill="#808080"/><rect x="2" y="9" width="2" height="1" fill="#D4D0C8"/><rect x="4" y="9" width="4" height="1" fill="#FFFFFF"/><rect x="8" y="9" width="2" height="1" fill="#D4D0C8"/><rect x="10" y="9" width="1" height="1" fill="#FFFFFF"/><rect x="2" y="10" width="2" height="1" fill="#FFFFFF"/><rect x="4" y="10" width="4" height="1" fill="#D4D0C8"/><rect x="8" y="10" width="2" height="1" fill="#FFFFFF"/><rect x="4" y="11" width="4" height="1" fill="#FFFFFF"/></svg>
<div class="t" style="left:314.2px;top:113.84px;color:#FFFF00;font-size:12px;font-weight:400;transform:scaleX(0.9047);">Impédance haute</div>
<div style="position:absolute;left:428px;top:55px;width:265px;height:74px;box-sizing:border-box;border:1px solid #808080;"></div>
<div style="position:absolute;left:429px;top:56px;width:265px;height:74px;box-sizing:border-box;border:1px solid #fff;"></div>
<div style="position:absolute;left:436px;top:53px;width:83px;height:5px;background:#008080;"></div>
<div class="t" style="left:439.2px;top:48.84px;color:#000;font-size:12px;font-weight:400;transform:scaleX(0.8792);">Bandes à utiliser</div>
<div style="position:absolute;left:448px;top:70px;width:13px;height:13px;background:#fff;box-shadow:inset 1px 1px 0 #808080, inset -1px -1px 0 #fff, inset 2px 2px 0 #404040, inset -2px -2px 0 #D4D0C8;"></div>
<svg style="position:absolute;left:448px;top:70px" width="13" height="13" viewBox="0 0 13 13" shape-rendering="crispEdges"><path d="M3 5h1v3h-1zM4 6h1v3h-1zM5 7h1v3h-1zM6 6h1v3h-1zM7 5h1v3h-1zM8 4h1v3h-1zM9 3h1v3h-1z" fill="#000"/></svg>
<div class="t" style="left:466.4px;top:68.84px;color:#000;font-size:12px;font-weight:400;transform:scaleX(0.8996);">80 m</div>
<div style="position:absolute;left:509px;top:70px;width:13px;height:13px;background:#fff;box-shadow:inset 1px 1px 0 #808080, inset -1px -1px 0 #fff, inset 2px 2px 0 #404040, inset -2px -2px 0 #D4D0C8;"></div>
<svg style="position:absolute;left:509px;top:70px" width="13" height="13" viewBox="0 0 13 13" shape-rendering="crispEdges"><path d="M3 5h1v3h-1zM4 6h1v3h-1zM5 7h1v3h-1zM6 6h1v3h-1zM7 5h1v3h-1zM8 4h1v3h-1zM9 3h1v3h-1z" fill="#000"/></svg>
<div class="t" style="left:527.4px;top:68.84px;color:#000;font-size:12px;font-weight:400;transform:scaleX(0.8996);">30 m</div>
<div style="position:absolute;left:571px;top:70px;width:13px;height:13px;background:#fff;box-shadow:inset 1px 1px 0 #808080, inset -1px -1px 0 #fff, inset 2px 2px 0 #404040, inset -2px -2px 0 #D4D0C8;"></div>
<svg style="position:absolute;left:571px;top:70px" width="13" height="13" viewBox="0 0 13 13" shape-rendering="crispEdges"><path d="M3 5h1v3h-1zM4 6h1v3h-1zM5 7h1v3h-1zM6 6h1v3h-1zM7 5h1v3h-1zM8 4h1v3h-1zM9 3h1v3h-1z" fill="#000"/></svg>
<div class="t" style="left:589.4px;top:68.84px;color:#000;font-size:12px;font-weight:400;transform:scaleX(0.8996);">17 m</div>
<div style="position:absolute;left:633px;top:70px;width:13px;height:13px;background:#fff;box-shadow:inset 1px 1px 0 #808080, inset -1px -1px 0 #fff, inset 2px 2px 0 #404040, inset -2px -2px 0 #D4D0C8;"></div>
<svg style="position:absolute;left:633px;top:70px" width="13" height="13" viewBox="0 0 13 13" shape-rendering="crispEdges"><path d="M3 5h1v3h-1zM4 6h1v3h-1zM5 7h1v3h-1zM6 6h1v3h-1zM7 5h1v3h-1zM8 4h1v3h-1zM9 3h1v3h-1z" fill="#000"/></svg>
<div class="t" style="left:651.4px;top:68.84px;color:#000;font-size:12px;font-weight:400;transform:scaleX(0.8996);">12 m</div>
<div style="position:absolute;left:448px;top:98px;width:13px;height:13px;background:#fff;box-shadow:inset 1px 1px 0 #808080, inset -1px -1px 0 #fff, inset 2px 2px 0 #404040, inset -2px -2px 0 #D4D0C8;"></div>
<svg style="position:absolute;left:448px;top:98px" width="13" height="13" viewBox="0 0 13 13" shape-rendering="crispEdges"><path d="M3 5h1v3h-1zM4 6h1v3h-1zM5 7h1v3h-1zM6 6h1v3h-1zM7 5h1v3h-1zM8 4h1v3h-1zM9 3h1v3h-1z" fill="#000"/></svg>
<div class="t" style="left:466.4px;top:96.84px;color:#000;font-size:12px;font-weight:400;transform:scaleX(0.8996);">40 m</div>
<div style="position:absolute;left:509px;top:98px;width:13px;height:13px;background:#fff;box-shadow:inset 1px 1px 0 #808080, inset -1px -1px 0 #fff, inset 2px 2px 0 #404040, inset -2px -2px 0 #D4D0C8;"></div>
<svg style="position:absolute;left:509px;top:98px" width="13" height="13" viewBox="0 0 13 13" shape-rendering="crispEdges"><path d="M3 5h1v3h-1zM4 6h1v3h-1zM5 7h1v3h-1zM6 6h1v3h-1zM7 5h1v3h-1zM8 4h1v3h-1zM9 3h1v3h-1z" fill="#000"/></svg>
<div class="t" style="left:527.4px;top:96.84px;color:#000;font-size:12px;font-weight:400;transform:scaleX(0.8996);">20 m</div>
<div style="position:absolute;left:571px;top:98px;width:13px;height:13px;background:#fff;box-shadow:inset 1px 1px 0 #808080, inset -1px -1px 0 #fff, inset 2px 2px 0 #404040, inset -2px -2px 0 #D4D0C8;"></div>
<svg style="position:absolute;left:571px;top:98px" width="13" height="13" viewBox="0 0 13 13" shape-rendering="crispEdges"><path d="M3 5h1v3h-1zM4 6h1v3h-1zM5 7h1v3h-1zM6 6h1v3h-1zM7 5h1v3h-1zM8 4h1v3h-1zM9 3h1v3h-1z" fill="#000"/></svg>
<div class="t" style="left:589.4px;top:96.84px;color:#000;font-size:12px;font-weight:400;transform:scaleX(0.8996);">15 m</div>
<div style="position:absolute;left:633px;top:98px;width:13px;height:13px;background:#fff;box-shadow:inset 1px 1px 0 #808080, inset -1px -1px 0 #fff, inset 2px 2px 0 #404040, inset -2px -2px 0 #D4D0C8;"></div>
<svg style="position:absolute;left:633px;top:98px" width="13" height="13" viewBox="0 0 13 13" shape-rendering="crispEdges"><path d="M3 5h1v3h-1zM4 6h1v3h-1zM5 7h1v3h-1zM6 6h1v3h-1zM7 5h1v3h-1zM8 4h1v3h-1zM9 3h1v3h-1z" fill="#000"/></svg>
<div class="t" style="left:651.4px;top:96.84px;color:#000;font-size:12px;font-weight:400;transform:scaleX(0.8996);">10 m</div>
<div style="position:absolute;left:707px;top:62px;width:73px;height:25px;background:#D4D0C8;box-shadow:inset 0 0 0 1px #000, inset 2px 2px 0 #fff, inset -2px -2px 0 #404040, inset -3px -3px 0 #808080;"></div>
<div style="position:absolute;left:711px;top:66px;width:63px;height:15px;border:1px dotted #000;"></div>
<div class="t" style="left:726.6px;top:65.84px;color:#000;font-size:12px;font-weight:400;transform:scaleX(0.9103);">Lancer</div>
<div style="position:absolute;left:707px;top:98px;width:73px;height:25px;background:#D4D0C8;box-shadow:inset 1px 1px 0 #fff, inset -1px -1px 0 #404040, inset -2px -2px 0 #808080;"></div>
<svg style="position:absolute;left:716px;top:101px" width="20" height="20" viewBox="0 0 20 20" shape-rendering="crispEdges">
<rect x="7" y="1" width="6" height="3" fill="#000"/><rect x="8" y="2" width="4" height="1" fill="#00E000"/>
<rect x="5" y="5" width="10" height="1" fill="#000080"/><rect x="5" y="5" width="1" height="13" fill="#000080"/><rect x="14" y="5" width="1" height="13" fill="#000080"/>
<rect x="6" y="6" width="4" height="11" fill="#E000E0"/><rect x="10" y="6" width="4" height="11" fill="#A0FFFF"/>
<rect x="10" y="11" width="3" height="7" fill="#fff"/><rect x="7" y="16" width="3" height="2" fill="#808080"/>
<rect x="1" y="17" width="5" height="1" fill="#0000C0"/><rect x="14" y="17" width="5" height="1" fill="#0000C0"/>
</svg>
<div class="t" style="left:738.6px;top:102.84px;color:#000;font-size:12px;font-weight:400;transform:scaleX(0.8586);"><u>F</u>ermer</div>
<div class="t" style="left:9.0px;top:309.84px;color:#FF6880;font-size:12px;font-weight:400;transform:scaleX(0.9034);">80 m</div>
<div class="t" style="left:9.0px;top:330.84px;color:#FF0000;font-size:12px;font-weight:400;transform:scaleX(0.9034);">40 m</div>
<div class="t" style="left:9.0px;top:350.84px;color:#FFFF00;font-size:12px;font-weight:400;transform:scaleX(0.9034);">30 m</div>
<div class="t" style="left:9.0px;top:371.84px;color:#0000FF;font-size:12px;font-weight:400;transform:scaleX(0.9034);">20 m</div>
<div class="t" style="left:9.0px;top:391.84px;color:#FF8020;font-size:12px;font-weight:400;transform:scaleX(0.9034);">17 m</div>
<div class="t" style="left:9.0px;top:412.84px;color:#0068B8;font-size:12px;font-weight:400;transform:scaleX(0.9034);">15 m</div>
<div class="t" style="left:9.0px;top:433.84px;color:#80FF80;font-size:12px;font-weight:400;transform:scaleX(0.9034);">12 m</div>
<div class="t" style="left:9.0px;top:453.84px;color:#FF00FF;font-size:12px;font-weight:400;transform:scaleX(0.9034);">10 m</div>
<div class="t" style="left:9.0px;top:167.84px;color:#000;font-size:12px;font-weight:400;transform:scaleX(0.88);">A</div>
<div class="t" style="left:312.0px;top:167.84px;color:#000;font-size:12px;font-weight:400;transform:scaleX(0.88);">B</div>
<div class="t" style="left:777.0px;top:167.84px;color:#000;font-size:12px;font-weight:400;transform:scaleX(0.88);">C</div>
<div class="t" style="left:755.2px;top:453.84px;color:#FF6880;font-size:12px;font-weight:400;transform:scaleX(0.8869);">EZ</div>
<div class="t" style="left:386.2px;top:453.84px;color:#FF0000;font-size:12px;font-weight:400;transform:scaleX(0.8869);">EZ</div>
<div class="t" style="left:265.2px;top:453.84px;color:#FFFF00;font-size:12px;font-weight:400;transform:scaleX(0.8869);">EZ</div>
<div class="t" style="left:187.2px;top:453.84px;color:#0000FF;font-size:12px;font-weight:400;transform:scaleX(0.8869);">EZ</div>
<div class="t" style="left:144.2px;top:453.84px;color:#FF8020;font-size:12px;font-weight:400;transform:scaleX(0.8869);">EZ</div>
<div class="t" style="left:121.2px;top:453.84px;color:#0068B8;font-size:12px;font-weight:400;transform:scaleX(0.8869);">EZ</div>
<div class="t" style="left:101.2px;top:453.84px;color:#80FF80;font-size:12px;font-weight:400;transform:scaleX(0.8869);">EZ</div>
<div class="t" style="left:88.2px;top:453.84px;color:#FF00FF;font-size:12px;font-weight:400;transform:scaleX(0.8869);">EZ</div>
<div style="position:absolute;left:32px;top:487px;width:284px;height:59px;box-sizing:border-box;border:1px solid #808080;"></div>
<div style="position:absolute;left:33px;top:488px;width:284px;height:59px;box-sizing:border-box;border:1px solid #fff;"></div>
<div style="position:absolute;left:40px;top:485px;width:156px;height:5px;background:#008080;"></div>
<div class="t" style="left:43.0px;top:480.84px;color:#000;font-size:12px;font-weight:400;transform:scaleX(0.8813);">Longueur Electrique &amp; Physique</div>
<div class="t" style="left:39.0px;top:502.84px;color:#000;font-size:12px;font-weight:400;transform:scaleX(0.9297);">A - B =</div>
<div style="position:absolute;left:80px;top:502px;width:37px;height:21px;background:#fff;box-shadow:inset 1px 1px 0 #808080, inset -1px -1px 0 #fff, inset 2px 2px 0 #404040, inset -2px -2px 0 #D4D0C8;"></div>
<div class="t" style="left:84.1px;top:503.84px;color:#000;font-size:12px;font-weight:400;transform:scaleX(0.9291);">2126</div>
<div style="position:absolute;left:132px;top:502px;width:37px;height:21px;background:#fff;box-shadow:inset 1px 1px 0 #808080, inset -1px -1px 0 #fff, inset 2px 2px 0 #404040, inset -2px -2px 0 #D4D0C8;"></div>
<div class="t" style="left:136.1px;top:503.84px;color:#000;font-size:12px;font-weight:400;transform:scaleX(0.9291);">2062</div>
<div class="t" style="left:175.8px;top:502.84px;color:#000;font-size:12px;font-weight:400;transform:scaleX(0.8918);">B - C =</div>
<div style="position:absolute;left:215px;top:502px;width:38px;height:21px;background:#fff;box-shadow:inset 1px 1px 0 #808080, inset -1px -1px 0 #fff, inset 2px 2px 0 #404040, inset -2px -2px 0 #D4D0C8;"></div>
<div class="t" style="left:219.1px;top:503.84px;color:#000;font-size:12px;font-weight:400;transform:scaleX(0.9291);">3261</div>
<div style="position:absolute;left:272px;top:502px;width:38px;height:21px;background:#fff;box-shadow:inset 1px 1px 0 #808080, inset -1px -1px 0 #fff, inset 2px 2px 0 #404040, inset -2px -2px 0 #D4D0C8;"></div>
<div class="t" style="left:276.1px;top:503.84px;color:#000;font-size:12px;font-weight:400;transform:scaleX(0.9291);">3000</div>
<div style="position:absolute;left:344px;top:490px;width:69px;height:25px;background:#D4D0C8;box-shadow:inset 1px 1px 0 #fff, inset -1px -1px 0 #404040, inset -2px -2px 0 #808080;"></div>
<div class="t" style="left:357.7px;top:493.84px;color:#000;font-size:12px;font-weight:400;transform:scaleX(0.8995);">A &lt;--&gt; B</div>
<div style="position:absolute;left:424px;top:490px;width:33px;height:25px;background:#D4D0C8;box-shadow:inset 1px 1px 0 #fff, inset -1px -1px 0 #404040, inset -2px -2px 0 #808080;"></div>
<svg style="position:absolute;left:433px;top:495px" width="16" height="16" viewBox="0 0 16 16" shape-rendering="crispEdges">
<path d="M3 0h7v1h1v1h1v1h1v6h-10z" fill="#000"/><path d="M4 1h5v3h3v4h-8z" fill="#fff"/>
<rect x="5" y="2" width="2" height="1" fill="#000"/><rect x="5" y="4" width="2" height="1" fill="#000"/><rect x="5" y="6" width="4" height="1" fill="#000"/><rect x="10" y="6" width="1" height="1" fill="#000"/><rect x="10" y="2" width="1" height="2" fill="#fff"/>
<rect x="0" y="8" width="16" height="8" fill="#000"/><rect x="1" y="9" width="14" height="3" fill="#fff"/>
<rect x="2" y="10" width="1" height="1" fill="#888"/><rect x="4" y="10" width="1" height="1" fill="#888"/><rect x="6" y="10" width="1" height="1" fill="#888"/><rect x="8" y="10" width="1" height="1" fill="#888"/><rect x="10" y="10" width="1" height="1" fill="#888"/>
<rect x="3" y="11" width="1" height="1" fill="#bbb"/><rect x="5" y="11" width="1" height="1" fill="#bbb"/><rect x="7" y="11" width="1" height="1" fill="#bbb"/><rect x="9" y="11" width="1" height="1" fill="#bbb"/><rect x="11" y="11" width="1" height="1" fill="#bbb"/>
<rect x="13" y="10" width="1" height="1" fill="#FF0000"/>
<rect x="1" y="13" width="14" height="2" fill="#C0C0C0"/><rect x="0" y="15" width="1" height="1" fill="#D4D0C8"/><rect x="15" y="15" width="1" height="1" fill="#D4D0C8"/>
</svg>
<div style="position:absolute;left:467px;top:490px;width:69px;height:25px;background:#D4D0C8;box-shadow:inset 1px 1px 0 #fff, inset -1px -1px 0 #404040, inset -2px -2px 0 #808080;"></div>
<div class="t" style="left:481.6px;top:493.84px;color:#000;font-size:12px;font-weight:400;transform:scaleX(0.8776);">B &lt;--&gt; C</div>
<div style="position:absolute;left:344px;top:523px;width:193px;height:21px;background:#D4D0C8;box-shadow:inset 1px 1px 0 #fff, inset -1px -1px 0 #404040, inset -2px -2px 0 #808080;"></div>
<div class="t" style="left:355.5px;top:524.84px;color:#000;font-size:12px;font-weight:400;transform:scaleX(0.8927);">Lobes de rayonnement de l'antenne</div>
<div style="position:absolute;left:556px;top:479px;width:132px;height:67px;box-sizing:border-box;border:1px solid #808080;"></div>
<div style="position:absolute;left:557px;top:480px;width:132px;height:67px;box-sizing:border-box;border:1px solid #fff;"></div>
<div style="position:absolute;left:564px;top:477px;width:113px;height:5px;background:#008080;"></div>
<div class="t" style="left:567.0px;top:472.84px;color:#000;font-size:12px;font-weight:400;transform:scaleX(0.8816);">Limite des impédances</div>
<div class="t" style="left:578.9px;top:488.84px;color:#FFFF00;font-size:12px;font-weight:400;transform:scaleX(0.8726);">Limite basse :</div>
<div style="position:absolute;left:648px;top:490px;width:29px;height:13px;background:#C0C0C0;"></div>
<div class="t" style="left:648.9px;top:488.84px;color:#000;font-size:12px;font-weight:400;transform:scaleX(1.015);">0 . 8</div>
<div class="t" style="left:563.9px;top:508.84px;color:#C0C0C0;font-size:12px;font-weight:400;transform:scaleX(0.8711);">Limite moyenne :</div>
<div style="position:absolute;left:648px;top:510px;width:29px;height:13px;background:#808080;"></div>
<div class="t" style="left:648.9px;top:508.84px;color:#000;font-size:12px;font-weight:400;transform:scaleX(1.015);">0 . 6</div>
<div class="t" style="left:580.2px;top:528.84px;color:#C0C0C0;font-size:12px;font-weight:400;transform:scaleX(0.8787);">Limite haute :</div>
<div style="position:absolute;left:648px;top:530px;width:29px;height:13px;background:#0000FF;"></div>
<div class="t" style="left:648.9px;top:528.84px;color:#FFFF00;font-size:12px;font-weight:400;transform:scaleX(1.015);">0 . 3</div>
<div style="position:absolute;left:711px;top:495px;width:65px;height:25px;background:#D4D0C8;box-shadow:inset 1px 1px 0 #fff, inset -1px -1px 0 #404040, inset -2px -2px 0 #808080;"></div>
<div class="t" style="left:724.5px;top:497px;font-size:21px;font-weight:700;font-style:italic;color:#00D8D8;text-shadow:1px 1px 0 #000080,-1px -1px 0 #00FFFF;line-height:24px;transform:scaleX(1)">?</div>
<div class="t" style="left:743.2px;top:499.84px;color:#000;font-size:12px;font-weight:400;transform:scaleX(0.941);"><u>A</u>ide</div>
</div></body></html>
